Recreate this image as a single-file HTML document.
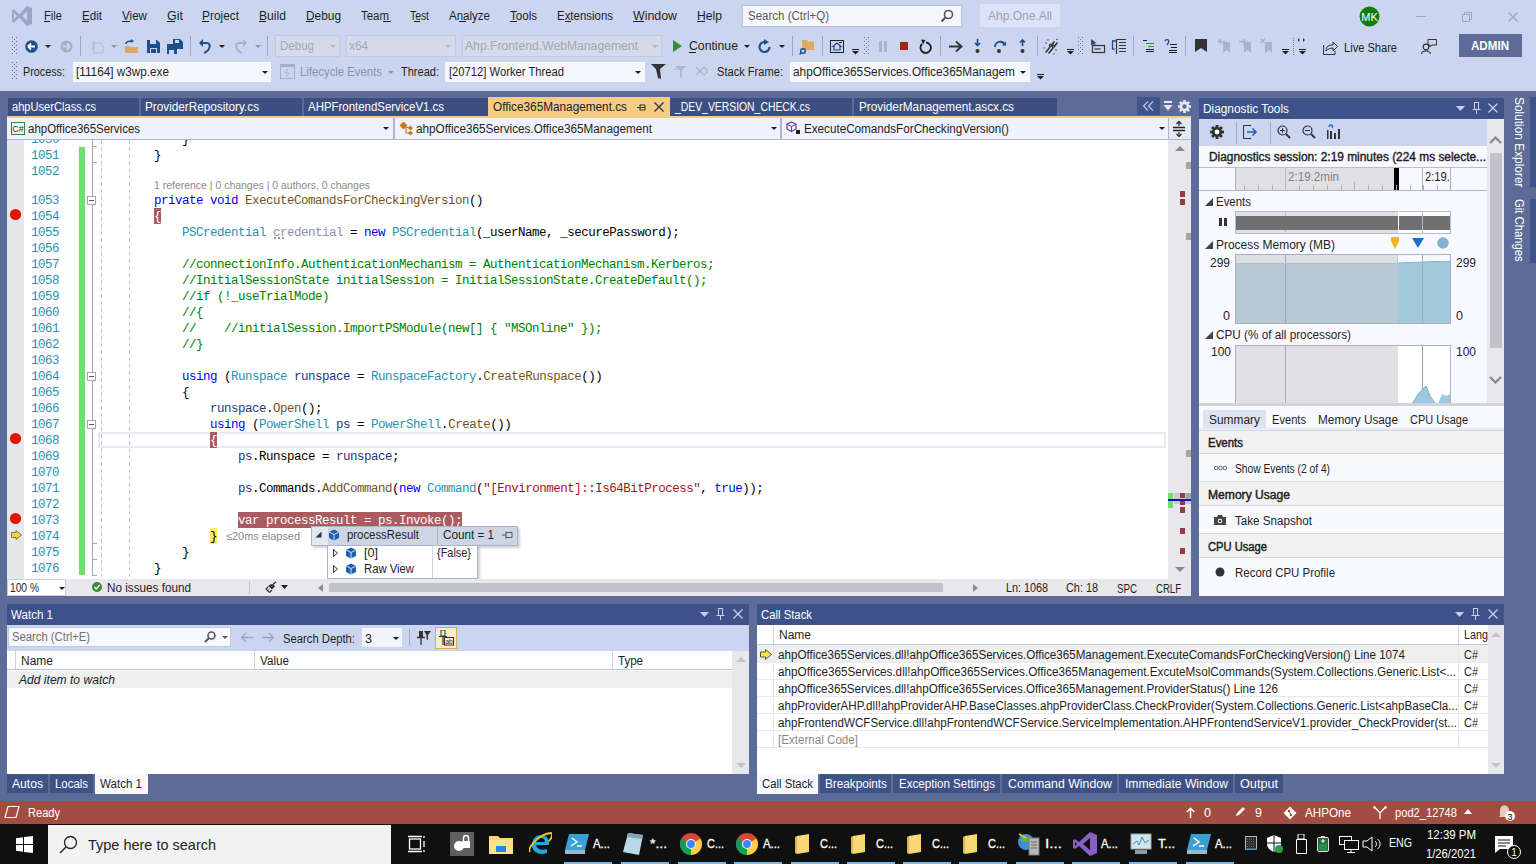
<!DOCTYPE html><html><head><meta charset='utf-8'><title>VS</title><style>
*{margin:0;padding:0;box-sizing:border-box}
html,body{width:1536px;height:864px;overflow:hidden;background:#5d6b99;font-family:'Liberation Sans', sans-serif;}
.a{position:absolute;display:block}
.t{white-space:pre;transform-origin:0 0}
</style></head><body>
<div class="a" style="left:0px;top:0px;width:1536px;height:91px;background:#ccd5f0;"></div>
<svg class="a" style="left:12px;top:6px;" width="20" height="20" viewBox="0 0 20 20"><path d="M0 4.5 L2 3.5 L7.5 8.3 L15 0 L20 2.3 V17.7 L15 20 L7.5 11.7 L2 16.5 L0 15.5 Z M2 7 V13 L5.2 10 Z M15 5.8 V14.2 L10.3 10 Z" fill="#9aa5c9" fill-rule="evenodd"/></svg>
<span class="a t" id="t1" style="transform:scaleX(0.9305);left:44px;top:9.84px;font-size:12px;line-height:12px;color:#1e1e1e;">File</span>
<span class="a t" id="t2" style="transform:scaleX(0.9668);left:82px;top:9.84px;font-size:12px;line-height:12px;color:#1e1e1e;">Edit</span>
<span class="a t" id="t3" style="transform:scaleX(0.9691);left:122px;top:9.84px;font-size:12px;line-height:12px;color:#1e1e1e;">View</span>
<span class="a t" id="t4" style="transform:scaleX(1.0428);left:167px;top:9.84px;font-size:12px;line-height:12px;color:#1e1e1e;">Git</span>
<span class="a t" id="t5" style="transform:scaleX(0.9904);left:202px;top:9.84px;font-size:12px;line-height:12px;color:#1e1e1e;">Project</span>
<span class="a t" id="t6" style="transform:scaleX(1.0117);left:259px;top:9.84px;font-size:12px;line-height:12px;color:#1e1e1e;">Build</span>
<span class="a t" id="t7" style="transform:scaleX(0.9894);left:306px;top:9.84px;font-size:12px;line-height:12px;color:#1e1e1e;">Debug</span>
<span class="a t" id="t8" style="transform:scaleX(0.9542);left:361px;top:9.84px;font-size:12px;line-height:12px;color:#1e1e1e;">Team</span>
<span class="a t" id="t9" style="transform:scaleX(0.8630);left:410px;top:9.84px;font-size:12px;line-height:12px;color:#1e1e1e;">Test</span>
<span class="a t" id="t10" style="transform:scaleX(0.9601);left:449px;top:9.84px;font-size:12px;line-height:12px;color:#1e1e1e;">Analyze</span>
<span class="a t" id="t11" style="transform:scaleX(0.9637);left:510px;top:9.84px;font-size:12px;line-height:12px;color:#1e1e1e;">Tools</span>
<span class="a t" id="t12" style="transform:scaleX(0.9540);left:557px;top:9.84px;font-size:12px;line-height:12px;color:#1e1e1e;">Extensions</span>
<span class="a t" id="t13" style="transform:scaleX(1.0307);left:633px;top:9.84px;font-size:12px;line-height:12px;color:#1e1e1e;">Window</span>
<span class="a t" id="t14" style="transform:scaleX(1.0127);left:697px;top:9.84px;font-size:12px;line-height:12px;color:#1e1e1e;">Help</span>
<div class="a" style="left:44px;top:21px;width:6px;height:1px;background:#1e1e1e;"></div>
<div class="a" style="left:82px;top:21px;width:7px;height:1px;background:#1e1e1e;"></div>
<div class="a" style="left:122px;top:21px;width:8px;height:1px;background:#1e1e1e;"></div>
<div class="a" style="left:167px;top:21px;width:8px;height:1px;background:#1e1e1e;"></div>
<div class="a" style="left:202px;top:21px;width:7px;height:1px;background:#1e1e1e;"></div>
<div class="a" style="left:259px;top:21px;width:7px;height:1px;background:#1e1e1e;"></div>
<div class="a" style="left:306px;top:21px;width:8px;height:1px;background:#1e1e1e;"></div>
<div class="a" style="left:383px;top:21px;width:8px;height:1px;background:#1e1e1e;"></div>
<div class="a" style="left:414px;top:21px;width:6px;height:1px;background:#1e1e1e;"></div>
<div class="a" style="left:459px;top:21px;width:7px;height:1px;background:#1e1e1e;"></div>
<div class="a" style="left:510px;top:21px;width:7px;height:1px;background:#1e1e1e;"></div>
<div class="a" style="left:565px;top:21px;width:6px;height:1px;background:#1e1e1e;"></div>
<div class="a" style="left:633px;top:21px;width:11px;height:1px;background:#1e1e1e;"></div>
<div class="a" style="left:697px;top:21px;width:8px;height:1px;background:#1e1e1e;"></div>
<div class="a" style="left:742px;top:5px;width:220px;height:22px;background:#f5f7fc;border:1px solid #b9c2dd;"></div>
<span class="a t" id="t15" style="transform:scaleX(0.9602);left:748px;top:9.84px;font-size:12px;line-height:12px;color:#5a5a5a;">Search (Ctrl+Q)</span>
<svg class="a" style="left:940px;top:9px;" width="14" height="14" viewBox="0 0 14 14"><circle cx="8.5" cy="5.5" r="4" fill="none" stroke="#555" stroke-width="1.6"/><path d="M5.7 8.3 L1.5 12.5" stroke="#555" stroke-width="2"/></svg>
<div class="a" style="left:980px;top:4px;width:80px;height:23px;background:#dde3f6;"></div>
<span class="a t" id="t16" style="transform:scaleX(0.9993);left:988px;top:9.84px;font-size:12px;line-height:12px;color:#9aa1b8;">Ahp.One.All</span>
<svg class="a" style="left:1359px;top:6px;" width="21" height="21" viewBox="0 0 21 21"><circle cx="10.5" cy="10.5" r="10" fill="#107c10"/><text x="10.5" y="14.5" font-family="Liberation Sans" font-size="11" fill="#fff" text-anchor="middle">MK</text></svg>
<div class="a" style="left:1416px;top:16px;width:10px;height:1px;background:#9aa3bf;"></div>
<svg class="a" style="left:1462px;top:12px;" width="11" height="10" viewBox="0 0 11 10"><rect x="0.5" y="2.5" width="7" height="7" fill="none" stroke="#9aa3bf"/><path d="M2.5 2.5 V0.5 H9.5 V7.5 H7.5" fill="none" stroke="#9aa3bf"/></svg>
<svg class="a" style="left:1508px;top:12px;" width="10" height="10" viewBox="0 0 10 10"><path d="M0.5 0.5 L9.5 9.5 M9.5 0.5 L0.5 9.5" stroke="#9aa3bf" stroke-width="1.1"/></svg>
<svg class="a" style="left:12px;top:37px;" width="5" height="18" viewBox="0 0 5 18"><rect x="0" y="0" width="1" height="1" fill="#66719a"/><rect x="4" y="0" width="1" height="1" fill="#66719a"/><rect x="2" y="2" width="1" height="1" fill="#66719a"/><rect x="2" y="2" width="1" height="1" fill="#66719a"/><rect x="0" y="4" width="1" height="1" fill="#66719a"/><rect x="4" y="4" width="1" height="1" fill="#66719a"/><rect x="2" y="6" width="1" height="1" fill="#66719a"/><rect x="2" y="6" width="1" height="1" fill="#66719a"/><rect x="0" y="8" width="1" height="1" fill="#66719a"/><rect x="4" y="8" width="1" height="1" fill="#66719a"/><rect x="2" y="10" width="1" height="1" fill="#66719a"/><rect x="2" y="10" width="1" height="1" fill="#66719a"/><rect x="0" y="12" width="1" height="1" fill="#66719a"/><rect x="4" y="12" width="1" height="1" fill="#66719a"/><rect x="2" y="14" width="1" height="1" fill="#66719a"/><rect x="2" y="14" width="1" height="1" fill="#66719a"/><rect x="0" y="16" width="1" height="1" fill="#66719a"/><rect x="4" y="16" width="1" height="1" fill="#66719a"/></svg>
<svg class="a" style="left:25px;top:40px;" width="13" height="13" viewBox="0 0 13 13"><circle cx="6.5" cy="6.5" r="6.3" fill="#1e4e8c"/><path d="M3 6.5 H10 M3 6.5 L6 3.5 M3 6.5 L6 9.5" stroke="#fff" stroke-width="1.8" fill="none"/></svg>
<svg class="a" style="left:45px;top:45px;" width="6" height="3" viewBox="0 0 6 3"><path d="M0 0 H6 L3 3 Z" fill="#1e1e1e"/></svg>
<svg class="a" style="left:60px;top:40px;" width="13" height="13" viewBox="0 0 13 13"><circle cx="6.5" cy="6.5" r="6" fill="#a7afc7"/><path d="M10 6.5 H3 M10 6.5 L7 3.5 M10 6.5 L7 9.5" stroke="#ccd5f0" stroke-width="1.8" fill="none"/></svg>
<div class="a" style="left:80px;top:36px;width:1px;height:20px;background:#9aa6c9;"></div>
<svg class="a" style="left:90px;top:39px;" width="14" height="15" viewBox="0 0 14 15"><path d="M4 4 H10 L13 7 V14 H4 Z" fill="none" stroke="#b0b7cc"/><path d="M1 10 H3 V1" stroke="#b0b7cc" fill="none"/></svg>
<svg class="a" style="left:111px;top:45px;" width="6" height="3" viewBox="0 0 6 3"><path d="M0 0 H6 L3 3 Z" fill="#8e96ad"/></svg>
<svg class="a" style="left:124px;top:39px;" width="15" height="15" viewBox="0 0 15 15"><path d="M1 7 H5 L6 8 H14 V14 H1 Z" fill="#dcaa63"/><path d="M2 5 C2 2 5 2 8 2" stroke="#1e4e8c" stroke-width="1.5" fill="none"/><path d="M7 0 L10 2 L7 4 Z" fill="#1e4e8c"/></svg>
<svg class="a" style="left:147px;top:40px;" width="13" height="13" viewBox="0 0 13 13"><path d="M0 0 H10 L13 3 V13 H0 Z" fill="#1e4e8c"/><rect x="3" y="0" width="6" height="4" fill="#ccd5f0"/><rect x="3" y="8" width="7" height="5" fill="#ccd5f0"/><rect x="4" y="9" width="5" height="4" fill="#1e4e8c"/></svg>
<svg class="a" style="left:167px;top:39px;" width="16" height="15" viewBox="0 0 16 15"><path d="M6 0 H13 L16 3 V10 H6 Z" fill="#1e4e8c"/><path d="M0 5 H8 L10 7 V15 H0 Z" fill="#1e4e8c"/><rect x="2" y="11" width="5" height="4" fill="#ccd5f0"/><rect x="8" y="1" width="4" height="3" fill="#ccd5f0"/></svg>
<div class="a" style="left:190px;top:36px;width:1px;height:20px;background:#9aa6c9;"></div>
<svg class="a" style="left:199px;top:39px;" width="13" height="15" viewBox="0 0 13 15"><path d="M2 4 H8 C12 4 12 11 5 14" stroke="#1e4e8c" stroke-width="2" fill="none"/><path d="M0 4 L4 0 V8 Z" fill="#1e4e8c"/></svg>
<svg class="a" style="left:219px;top:45px;" width="6" height="3" viewBox="0 0 6 3"><path d="M0 0 H6 L3 3 Z" fill="#1e1e1e"/></svg>
<svg class="a" style="left:234px;top:39px;" width="13" height="15" viewBox="0 0 13 15"><path d="M11 4 H5 C1 4 1 11 8 14" stroke="#a7afc7" stroke-width="2" fill="none"/><path d="M13 4 L9 0 V8 Z" fill="#a7afc7"/></svg>
<svg class="a" style="left:255px;top:45px;" width="6" height="3" viewBox="0 0 6 3"><path d="M0 0 H6 L3 3 Z" fill="#8e96ad"/></svg>
<div class="a" style="left:267px;top:36px;width:1px;height:20px;background:#9aa6c9;"></div>
<div class="a" style="left:275px;top:35px;width:65px;height:22px;background:#d5dbea;border:1px solid #c3cadd;"></div>
<span class="a t" id="t17" style="transform:scaleX(0.9611);left:280px;top:39.84px;font-size:12px;line-height:12px;color:#a1a7b8;">Debug</span>
<svg class="a" style="left:330px;top:45px;" width="6" height="3" viewBox="0 0 6 3"><path d="M0 0 H6 L3 3 Z" fill="#b0b6c6"/></svg>
<div class="a" style="left:346px;top:35px;width:110px;height:22px;background:#d5dbea;border:1px solid #c3cadd;"></div>
<span class="a t" id="t18" style="transform:scaleX(0.9814);left:349px;top:39.84px;font-size:12px;line-height:12px;color:#a1a7b8;">x64</span>
<svg class="a" style="left:445px;top:45px;" width="6" height="3" viewBox="0 0 6 3"><path d="M0 0 H6 L3 3 Z" fill="#b0b6c6"/></svg>
<div class="a" style="left:462px;top:35px;width:200px;height:22px;background:#d5dbea;border:1px solid #c3cadd;"></div>
<span class="a t" id="t19" style="transform:scaleX(1.0143);left:465px;top:39.84px;font-size:12px;line-height:12px;color:#a1a7b8;">Ahp.Frontend.WebManagement</span>
<svg class="a" style="left:652px;top:45px;" width="6" height="3" viewBox="0 0 6 3"><path d="M0 0 H6 L3 3 Z" fill="#b0b6c6"/></svg>
<svg class="a" style="left:673px;top:40px;" width="9" height="12" viewBox="0 0 9 12"><path d="M0 0 L9 6 L0 12 Z" fill="#388a34"/></svg>
<span class="a t" id="t20" style="transform:scaleX(1.0198);left:689px;top:39.84px;font-size:12px;line-height:12px;color:#1e1e1e;">Continue</span>
<div class="a" style="left:689px;top:52px;width:7px;height:1px;background:#1e1e1e;"></div>
<svg class="a" style="left:744px;top:45px;" width="6" height="3" viewBox="0 0 6 3"><path d="M0 0 H6 L3 3 Z" fill="#1e1e1e"/></svg>
<svg class="a" style="left:758px;top:39px;" width="14" height="15" viewBox="0 0 14 15"><path d="M11.5 8 A5 5 0 1 1 7 3" stroke="#1e4e8c" stroke-width="2.2" fill="none"/><path d="M6 0 L11 3 L6 6 Z" fill="#1e4e8c"/></svg>
<svg class="a" style="left:779px;top:45px;" width="6" height="3" viewBox="0 0 6 3"><path d="M0 0 H6 L3 3 Z" fill="#1e1e1e"/></svg>
<div class="a" style="left:792px;top:36px;width:1px;height:20px;background:#9aa6c9;"></div>
<svg class="a" style="left:799px;top:39px;" width="16" height="16" viewBox="0 0 16 16"><path d="M3 1 H8 L9 2.5 H15 V11 H3 Z" fill="#dcaa63"/><circle cx="4" cy="12" r="2.3" fill="none" stroke="#1e4e8c" stroke-width="1.4"/><path d="M2.5 13.5 L0.5 15.5" stroke="#1e4e8c" stroke-width="1.5"/></svg>
<div class="a" style="left:822px;top:36px;width:1px;height:20px;background:#9aa6c9;"></div>
<svg class="a" style="left:830px;top:40px;" width="14" height="13" viewBox="0 0 14 13"><rect x="0.5" y="0.5" width="13" height="12" fill="none" stroke="#1e1e1e"/><path d="M7 3 L11 6.5 H10 V10 H4 V6.5 H3 Z" fill="none" stroke="#1e4e8c" stroke-width="1.2"/><rect x="9" y="2" width="3" height="1" fill="#1e1e1e"/></svg>
<div class="a" style="left:852px;top:49px;width:7px;height:1px;background:#1e1e1e;"></div>
<svg class="a" style="left:852px;top:51px;" width="7" height="4" viewBox="0 0 7 4"><path d="M0 0 H7 L3.5 3.5 Z" fill="#1e1e1e"/></svg>
<svg class="a" style="left:864px;top:37px;" width="5" height="18" viewBox="0 0 5 18"><rect x="0" y="0" width="1" height="1" fill="#66719a"/><rect x="4" y="0" width="1" height="1" fill="#66719a"/><rect x="2" y="2" width="1" height="1" fill="#66719a"/><rect x="2" y="2" width="1" height="1" fill="#66719a"/><rect x="0" y="4" width="1" height="1" fill="#66719a"/><rect x="4" y="4" width="1" height="1" fill="#66719a"/><rect x="2" y="6" width="1" height="1" fill="#66719a"/><rect x="2" y="6" width="1" height="1" fill="#66719a"/><rect x="0" y="8" width="1" height="1" fill="#66719a"/><rect x="4" y="8" width="1" height="1" fill="#66719a"/><rect x="2" y="10" width="1" height="1" fill="#66719a"/><rect x="2" y="10" width="1" height="1" fill="#66719a"/><rect x="0" y="12" width="1" height="1" fill="#66719a"/><rect x="4" y="12" width="1" height="1" fill="#66719a"/><rect x="2" y="14" width="1" height="1" fill="#66719a"/><rect x="2" y="14" width="1" height="1" fill="#66719a"/><rect x="0" y="16" width="1" height="1" fill="#66719a"/><rect x="4" y="16" width="1" height="1" fill="#66719a"/></svg>
<svg class="a" style="left:879px;top:41px;" width="8" height="11" viewBox="0 0 8 11"><rect x="0" y="0" width="3" height="11" fill="#aab2c8"/><rect x="5" y="0" width="3" height="11" fill="#aab2c8"/></svg>
<div class="a" style="left:900px;top:42px;width:8px;height:8px;background:#a1260d;"></div>
<svg class="a" style="left:919px;top:39px;" width="14" height="15" viewBox="0 0 14 15"><path d="M3 5 A5.2 5.2 0 1 0 7 3.5" stroke="#1e1e1e" stroke-width="1.8" fill="none"/><path d="M2 0.5 L6.5 1 L4 5.5 Z" fill="#1e1e1e"/></svg>
<div class="a" style="left:940px;top:36px;width:1px;height:20px;background:#9aa6c9;"></div>
<svg class="a" style="left:949px;top:40px;" width="14" height="13" viewBox="0 0 14 13"><path d="M0 6.5 H12 M7 1.5 L12.5 6.5 L7 11.5" stroke="#333" stroke-width="1.9" fill="none"/></svg>
<svg class="a" style="left:974px;top:39px;" width="7" height="15" viewBox="0 0 7 15"><path d="M3.5 0 V6 M1 4 L3.5 6.5 L6 4" stroke="#1e4e8c" stroke-width="1.7" fill="none"/><circle cx="3.5" cy="12" r="2" fill="#333"/></svg>
<svg class="a" style="left:993px;top:39px;" width="14" height="15" viewBox="0 0 14 15"><path d="M2 8 C2 2 10 1 12 6" stroke="#1e4e8c" stroke-width="1.8" fill="none"/><path d="M9 6.5 H13 V2.5 Z" fill="#1e4e8c"/><circle cx="6" cy="12" r="2" fill="#333"/></svg>
<svg class="a" style="left:1019px;top:39px;" width="7" height="15" viewBox="0 0 7 15"><path d="M3.5 7 V1 M1 3.5 L3.5 1 L6 3.5" stroke="#1e4e8c" stroke-width="1.7" fill="none"/><circle cx="3.5" cy="12" r="2" fill="#333"/></svg>
<div class="a" style="left:1037px;top:36px;width:1px;height:20px;background:#9aa6c9;"></div>
<svg class="a" style="left:1043px;top:38px;" width="17" height="17" viewBox="0 0 17 17"><path d="M3 14 L7 9 M8 8 L11 4 M6 15 L10 10 M11 9 L14 5" stroke="#333" stroke-width="1.6" stroke-linecap="round"/><path d="M7 9 C5 7 8 5 9 7 M10 10 C8 8 11 6 12 8" stroke="#333" stroke-width="1.1" fill="none"/><circle cx="3" cy="5" r="0.8" fill="#333"/><circle cx="13" cy="12" r="0.8" fill="#333"/><circle cx="5" cy="2" r="0.7" fill="#333"/><circle cx="14" cy="1.5" r="0.7" fill="#333"/><circle cx="1" cy="10" r="0.7" fill="#333"/><circle cx="11" cy="16" r="0.7" fill="#333"/></svg>
<div class="a" style="left:1067px;top:49px;width:7px;height:1px;background:#1e1e1e;"></div>
<svg class="a" style="left:1067px;top:51px;" width="7" height="4" viewBox="0 0 7 4"><path d="M0 0 H7 L3.5 3.5 Z" fill="#1e1e1e"/></svg>
<svg class="a" style="left:1078px;top:37px;" width="5" height="18" viewBox="0 0 5 18"><rect x="0" y="0" width="1" height="1" fill="#66719a"/><rect x="4" y="0" width="1" height="1" fill="#66719a"/><rect x="2" y="2" width="1" height="1" fill="#66719a"/><rect x="2" y="2" width="1" height="1" fill="#66719a"/><rect x="0" y="4" width="1" height="1" fill="#66719a"/><rect x="4" y="4" width="1" height="1" fill="#66719a"/><rect x="2" y="6" width="1" height="1" fill="#66719a"/><rect x="2" y="6" width="1" height="1" fill="#66719a"/><rect x="0" y="8" width="1" height="1" fill="#66719a"/><rect x="4" y="8" width="1" height="1" fill="#66719a"/><rect x="2" y="10" width="1" height="1" fill="#66719a"/><rect x="2" y="10" width="1" height="1" fill="#66719a"/><rect x="0" y="12" width="1" height="1" fill="#66719a"/><rect x="4" y="12" width="1" height="1" fill="#66719a"/><rect x="2" y="14" width="1" height="1" fill="#66719a"/><rect x="2" y="14" width="1" height="1" fill="#66719a"/><rect x="0" y="16" width="1" height="1" fill="#66719a"/><rect x="4" y="16" width="1" height="1" fill="#66719a"/></svg>
<svg class="a" style="left:1090px;top:38px;" width="16" height="16" viewBox="0 0 16 16"><path d="M1 1 L6.5 5 L4.5 5.5 L6 8 L5 8.5 L3.5 6 L1 7.5 Z" fill="#1e4e8c"/><rect x="2.5" y="7.5" width="12" height="7" fill="none" stroke="#333" stroke-width="1.2"/><path d="M4.5 11 H10.5" stroke="#333" stroke-width="1.2"/></svg>
<svg class="a" style="left:1111px;top:38px;" width="16" height="16" viewBox="0 0 16 16"><path d="M3.5 3 H1.5 V11 H3.5" stroke="#1e4e8c" stroke-width="1.3" fill="none"/><path d="M2 3 H5" stroke="#1e4e8c" stroke-width="1.3"/><path d="M5.5 1 V16" stroke="#333" stroke-width="1.2"/><path d="M6 1.5 H15 M8 4.5 H15 M8 7.5 H15 M8 10.5 H15 M8 13.5 H15" stroke="#333" stroke-width="1.1"/></svg>
<div class="a" style="left:1133px;top:36px;width:1px;height:20px;background:#9aa6c9;"></div>
<svg class="a" style="left:1143px;top:40px;" width="12" height="12" viewBox="0 0 12 12"><path d="M0 0.5 H4 M3 3.5 H11 M5 6.5 H11 M3 9.5 H11 M3 11.5 H11" stroke="#1e1e1e"/><path d="M3 3.5 H11 M5 6.5 H11" stroke="#388a34"/></svg>
<svg class="a" style="left:1164px;top:39px;" width="14" height="14" viewBox="0 0 14 14"><path d="M1 2 C3 -1 7 1 3 6" stroke="#1e4e8c" stroke-width="1.4" fill="none"/><path d="M6 5.5 H13 M7 8.5 H13 M5 11.5 H13 M5 13.5 H13" stroke="#1e1e1e"/></svg>
<div class="a" style="left:1185px;top:36px;width:1px;height:20px;background:#9aa6c9;"></div>
<svg class="a" style="left:1195px;top:39px;" width="12" height="13" viewBox="0 0 12 13"><path d="M0 0 H12 V13 L6 9 L0 13 Z" fill="#333"/></svg>
<svg class="a" style="left:1218px;top:38px;" width="13" height="15" viewBox="0 0 13 15"><path d="M5 4 H12 V15 L8.5 12 L5 15 Z" fill="#aab2c8"/><path d="M0.5 3.5 H7 M3 1 L0.5 3.5 L3 6" stroke="#aab2c8" stroke-width="1.3" fill="none"/></svg>
<svg class="a" style="left:1239px;top:38px;" width="13" height="15" viewBox="0 0 13 15"><path d="M5 4 H12 V15 L8.5 12 L5 15 Z" fill="#aab2c8"/><path d="M0 3.5 H6.5 M4 1 L6.5 3.5 L4 6" stroke="#aab2c8" stroke-width="1.3" fill="none"/></svg>
<svg class="a" style="left:1260px;top:38px;" width="13" height="15" viewBox="0 0 13 15"><path d="M5 4 H12 V15 L8.5 12 L5 15 Z" fill="#aab2c8"/><path d="M0.5 0.5 L5 5 M5 0.5 L0.5 5" stroke="#aab2c8" stroke-width="1.3"/></svg>
<div class="a" style="left:1282px;top:49px;width:7px;height:1px;background:#1e1e1e;"></div>
<svg class="a" style="left:1282px;top:51px;" width="7" height="4" viewBox="0 0 7 4"><path d="M0 0 H7 L3.5 3.5 Z" fill="#1e1e1e"/></svg>
<svg class="a" style="left:1293px;top:38px;" width="1" height="17" viewBox="0 0 1 17"><rect x="0" y="0" width="1" height="1" fill="#6f7a9c"/><rect x="0" y="2" width="1" height="1" fill="#6f7a9c"/><rect x="0" y="4" width="1" height="1" fill="#6f7a9c"/><rect x="0" y="6" width="1" height="1" fill="#6f7a9c"/><rect x="0" y="8" width="1" height="1" fill="#6f7a9c"/><rect x="0" y="10" width="1" height="1" fill="#6f7a9c"/><rect x="0" y="12" width="1" height="1" fill="#6f7a9c"/><rect x="0" y="14" width="1" height="1" fill="#6f7a9c"/><rect x="0" y="16" width="1" height="1" fill="#6f7a9c"/></svg>
<svg class="a" style="left:1298px;top:38px;" width="8" height="4" viewBox="0 0 8 4"><path d="M0 0 L2 2 L0 4 Z M5 0 L7 2 L5 4 Z" fill="#333"/></svg>
<div class="a" style="left:1299px;top:49px;width:7px;height:1px;background:#1e1e1e;"></div>
<svg class="a" style="left:1299px;top:51px;" width="7" height="4" viewBox="0 0 7 4"><path d="M0 0 H7 L3.5 3.5 Z" fill="#1e1e1e"/></svg>
<svg class="a" style="left:1323px;top:41px;" width="15" height="14" viewBox="0 0 15 14"><path d="M0.5 4 V13.5 H12 V10" stroke="#333" fill="none"/><path d="M3 10 C3 5 6 4 10 4 V1 L14.5 5.5 L10 10 V7 C7 7 5 8 3 10 Z" stroke="#333" fill="none"/></svg>
<span class="a t" id="t21" style="transform:scaleX(0.9237);left:1344px;top:41.84px;font-size:12px;line-height:12px;color:#1e1e1e;">Live Share</span>
<svg class="a" style="left:1421px;top:39px;" width="16" height="15" viewBox="0 0 16 15"><circle cx="5" cy="8" r="2.8" fill="none" stroke="#333" stroke-width="1.2"/><path d="M0.5 15 C1 11 9 11 9.5 15" stroke="#333" stroke-width="1.2" fill="none"/><path d="M7 0.5 H15.5 V6 H11 L9 8 V6 H7 Z" fill="none" stroke="#333"/></svg>
<div class="a" style="left:1459px;top:34px;width:63px;height:23px;background:#5d6b99;"></div>
<span class="a t" id="t22" style="transform:scaleX(0.9662);left:1471px;top:39.84px;font-size:12px;line-height:12px;color:#ffffff;font-weight:bold;">ADMIN</span>
<svg class="a" style="left:12px;top:62px;" width="5" height="18" viewBox="0 0 5 18"><rect x="0" y="0" width="1" height="1" fill="#66719a"/><rect x="4" y="0" width="1" height="1" fill="#66719a"/><rect x="2" y="2" width="1" height="1" fill="#66719a"/><rect x="2" y="2" width="1" height="1" fill="#66719a"/><rect x="0" y="4" width="1" height="1" fill="#66719a"/><rect x="4" y="4" width="1" height="1" fill="#66719a"/><rect x="2" y="6" width="1" height="1" fill="#66719a"/><rect x="2" y="6" width="1" height="1" fill="#66719a"/><rect x="0" y="8" width="1" height="1" fill="#66719a"/><rect x="4" y="8" width="1" height="1" fill="#66719a"/><rect x="2" y="10" width="1" height="1" fill="#66719a"/><rect x="2" y="10" width="1" height="1" fill="#66719a"/><rect x="0" y="12" width="1" height="1" fill="#66719a"/><rect x="4" y="12" width="1" height="1" fill="#66719a"/><rect x="2" y="14" width="1" height="1" fill="#66719a"/><rect x="2" y="14" width="1" height="1" fill="#66719a"/><rect x="0" y="16" width="1" height="1" fill="#66719a"/><rect x="4" y="16" width="1" height="1" fill="#66719a"/></svg>
<span class="a t" id="t23" style="transform:scaleX(0.8996);left:23px;top:65.84px;font-size:12px;line-height:12px;color:#1e1e1e;">Process:</span>
<div class="a" style="left:73px;top:62px;width:198px;height:20px;background:#f5f7fc;"></div>
<span class="a t" id="t24" style="transform:scaleX(0.9794);left:76px;top:65.84px;font-size:12px;line-height:12px;color:#1e1e1e;">[11164] w3wp.exe</span>
<svg class="a" style="left:262px;top:71px;" width="6" height="3" viewBox="0 0 6 3"><path d="M0 0 H6 L3 3 Z" fill="#1e1e1e"/></svg>
<svg class="a" style="left:280px;top:64px;" width="15" height="15" viewBox="0 0 15 15"><rect x="0.5" y="0.5" width="14" height="14" fill="none" stroke="#a7afc7"/><rect x="1" y="1" width="13" height="2" fill="#a7afc7"/><path d="M8 5 L5 9 H9 L6 13" stroke="#a7afc7" fill="none"/></svg>
<span class="a t" id="t25" style="transform:scaleX(0.9456);left:300px;top:65.84px;font-size:12px;line-height:12px;color:#8a91a7;">Lifecycle Events</span>
<svg class="a" style="left:388px;top:71px;" width="6" height="3" viewBox="0 0 6 3"><path d="M0 0 H6 L3 3 Z" fill="#8e96ad"/></svg>
<span class="a t" id="t26" style="transform:scaleX(0.9188);left:401px;top:65.84px;font-size:12px;line-height:12px;color:#1e1e1e;">Thread:</span>
<div class="a" style="left:445px;top:62px;width:200px;height:20px;background:#f5f7fc;"></div>
<span class="a t" id="t27" style="transform:scaleX(0.9352);left:449px;top:65.84px;font-size:12px;line-height:12px;color:#1e1e1e;">[20712] Worker Thread</span>
<svg class="a" style="left:635px;top:71px;" width="6" height="3" viewBox="0 0 6 3"><path d="M0 0 H6 L3 3 Z" fill="#1e1e1e"/></svg>
<svg class="a" style="left:651px;top:64px;" width="15" height="16" viewBox="0 0 15 16"><path d="M0 0 H15 L9 5 L10 15 L7 14 L5 5 Z" fill="#333"/></svg>
<svg class="a" style="left:674px;top:65px;" width="14" height="14" viewBox="0 0 14 14"><path d="M1 1 H13 L8 5 V13 L6 12 V5 Z" fill="#b0b7cc"/><path d="M0 4 H6" stroke="#b0b7cc"/></svg>
<svg class="a" style="left:695px;top:65px;" width="15" height="14" viewBox="0 0 15 14"><path d="M1 2 L5 6 L9 2 L13 6 M1 10 L5 6 L9 10 L13 6" stroke="#b0b7cc" stroke-width="1.5" fill="none"/></svg>
<span class="a t" id="t28" style="transform:scaleX(0.9249);left:717px;top:65.84px;font-size:12px;line-height:12px;color:#1e1e1e;">Stack Frame:</span>
<div class="a" style="left:790px;top:62px;width:240px;height:20px;background:#f5f7fc;"></div>
<span class="a t" id="t29" style="transform:scaleX(0.9865);left:793px;top:65.84px;font-size:12px;line-height:12px;color:#1e1e1e;">ahpOffice365Services.Office365Managem</span>
<svg class="a" style="left:1020px;top:71px;" width="6" height="3" viewBox="0 0 6 3"><path d="M0 0 H6 L3 3 Z" fill="#1e1e1e"/></svg>
<div class="a" style="left:1037px;top:74px;width:7px;height:1px;background:#1e1e1e;"></div>
<svg class="a" style="left:1037px;top:76px;" width="7" height="4" viewBox="0 0 7 4"><path d="M0 0 H7 L3.5 3.5 Z" fill="#1e1e1e"/></svg>
<div class="a" style="left:8px;top:98px;width:131px;height:18px;background:#3c4f80;"></div>
<span class="a t" id="t30" style="transform:scaleX(0.9261);left:12px;top:100.84px;font-size:12px;line-height:12px;color:#ffffff;">ahpUserClass.cs</span>
<div class="a" style="left:141px;top:98px;width:161px;height:18px;background:#3c4f80;"></div>
<span class="a t" id="t31" style="transform:scaleX(0.9787);left:145px;top:100.84px;font-size:12px;line-height:12px;color:#ffffff;">ProviderRepository.cs</span>
<div class="a" style="left:304px;top:98px;width:184px;height:18px;background:#3c4f80;"></div>
<span class="a t" id="t32" style="transform:scaleX(0.9528);left:308px;top:100.84px;font-size:12px;line-height:12px;color:#ffffff;">AHPFrontendServiceV1.cs</span>
<div class="a" style="left:670px;top:98px;width:182px;height:18px;background:#3c4f80;"></div>
<span class="a t" id="t33" style="transform:scaleX(0.8651);left:675px;top:100.84px;font-size:12px;line-height:12px;color:#ffffff;">_DEV_VERSION_CHECK.cs</span>
<div class="a" style="left:854px;top:98px;width:203px;height:18px;background:#3c4f80;"></div>
<span class="a t" id="t34" style="transform:scaleX(0.9805);left:859px;top:100.84px;font-size:12px;line-height:12px;color:#ffffff;">ProviderManagement.ascx.cs</span>
<div class="a" style="left:488px;top:97px;width:182px;height:21px;background:#f5cc84;"></div>
<span class="a t" id="t35" style="transform:scaleX(0.9815);left:493px;top:100.84px;font-size:12px;line-height:12px;color:#1e1e1e;">Office365Management.cs</span>
<svg class="a" style="left:636px;top:102px;" width="11" height="11" viewBox="0 0 11 11"><path d="M1 5.5 H4 M4 2.5 V8.5 M4 3 H9 V8 H4" stroke="#333" fill="none"/><rect x="4" y="5" width="5" height="1" fill="#333"/></svg>
<svg class="a" style="left:654px;top:102px;" width="10" height="10" viewBox="0 0 10 10"><path d="M0.5 0.5 L9.5 9.5 M9.5 0.5 L0.5 9.5" stroke="#333" stroke-width="1.3"/></svg>
<div class="a" style="left:1137px;top:97px;width:23px;height:18px;background:#40548c;"></div>
<svg class="a" style="left:1142px;top:101px;" width="12" height="10" viewBox="0 0 12 10"><path d="M6 0.5 L1.5 5 L6 9.5 M11 0.5 L6.5 5 L11 9.5" stroke="#c0c8e0" stroke-width="1.2" fill="none"/></svg>
<svg class="a" style="left:1163px;top:100px;" width="10" height="12" viewBox="0 0 10 12"><rect x="1" y="1" width="8" height="2" fill="#e6eaf5"/><path d="M0.5 5 H9.5 L5 10.5 Z" fill="#e6eaf5"/></svg>
<svg class="a" style="left:1178px;top:100px;" width="13" height="13" viewBox="0 0 13 13"><circle cx="6.5" cy="6.5" r="4.68" fill="#e6eaf5"/><rect x="5.2" y="0" width="2.6" height="3.9" fill="#e6eaf5" transform="rotate(0 6.5 6.5)"/><rect x="5.2" y="0" width="2.6" height="3.9" fill="#e6eaf5" transform="rotate(45 6.5 6.5)"/><rect x="5.2" y="0" width="2.6" height="3.9" fill="#e6eaf5" transform="rotate(90 6.5 6.5)"/><rect x="5.2" y="0" width="2.6" height="3.9" fill="#e6eaf5" transform="rotate(135 6.5 6.5)"/><rect x="5.2" y="0" width="2.6" height="3.9" fill="#e6eaf5" transform="rotate(180 6.5 6.5)"/><rect x="5.2" y="0" width="2.6" height="3.9" fill="#e6eaf5" transform="rotate(225 6.5 6.5)"/><rect x="5.2" y="0" width="2.6" height="3.9" fill="#e6eaf5" transform="rotate(270 6.5 6.5)"/><rect x="5.2" y="0" width="2.6" height="3.9" fill="#e6eaf5" transform="rotate(315 6.5 6.5)"/><circle cx="6.5" cy="6.5" r="2.21" fill="#5d6b99"/></svg>
<div class="a" style="left:7px;top:116px;width:1184px;height:2px;background:#f5cc84;"></div>
<div class="a" style="left:7px;top:118px;width:1184px;height:22px;background:#eff2fa;"></div>
<div class="a" style="left:7px;top:139px;width:1184px;height:1px;background:#a9b6d9;"></div>
<div class="a" style="left:393px;top:118px;width:2px;height:21px;background:#a9b6d9;"></div>
<div class="a" style="left:780px;top:118px;width:2px;height:21px;background:#a9b6d9;"></div>
<div class="a" style="left:1168px;top:118px;width:1px;height:21px;background:#a9b6d9;"></div>
<div class="a" style="left:1169px;top:118px;width:22px;height:21px;background:#e6eaf5;"></div>
<svg class="a" style="left:11px;top:122px;" width="14" height="13" viewBox="0 0 14 13"><rect x="0.5" y="0.5" width="13" height="12" fill="#f4f4f4" stroke="#388a34"/><text x="7" y="10" font-family="Liberation Sans" font-size="9" fill="#333" text-anchor="middle">C#</text></svg>
<span class="a t" id="t36" style="transform:scaleX(0.9557);left:28px;top:122.84px;font-size:12px;line-height:12px;color:#1e1e1e;">ahpOffice365Services</span>
<svg class="a" style="left:383px;top:127px;" width="6" height="3" viewBox="0 0 6 3"><path d="M0 0 H6 L3 3 Z" fill="#1e1e1e"/></svg>
<svg class="a" style="left:398px;top:120px;" width="16" height="16" viewBox="0 0 16 16"><path d="M5.5 1.5 L9.5 5.5 L5.5 9.5 L1.5 5.5 Z" fill="#c27d1a"/><path d="M12.5 5.5 L15 8 L12.5 10.5 L10 8 Z M12.5 10.5 L15 13 L12.5 15.5 L10 13 Z" fill="#c27d1a"/><path d="M8 7.5 H11 M8 7.5 V13 H11" stroke="#c27d1a" stroke-width="1.1" fill="none"/></svg>
<span class="a t" id="t37" style="transform:scaleX(0.9763);left:416px;top:122.84px;font-size:12px;line-height:12px;color:#1e1e1e;">ahpOffice365Services.Office365Management</span>
<svg class="a" style="left:771px;top:127px;" width="6" height="3" viewBox="0 0 6 3"><path d="M0 0 H6 L3 3 Z" fill="#1e1e1e"/></svg>
<svg class="a" style="left:786px;top:121px;" width="15" height="14" viewBox="0 0 15 14"><path d="M5.5 1 L10 3.2 V8 L5.5 10.5 L1 8 V3.2 Z" fill="none" stroke="#6c3fa8" stroke-width="1.2"/><path d="M1 3.2 L5.5 5.5 L10 3.2 M5.5 5.5 V10.5" stroke="#6c3fa8" fill="none"/><rect x="10" y="9" width="4" height="4" fill="#1e1e1e"/></svg>
<span class="a t" id="t38" style="transform:scaleX(0.9726);left:804px;top:122.84px;font-size:12px;line-height:12px;color:#1e1e1e;">ExecuteComandsForCheckingVersion()</span>
<svg class="a" style="left:1159px;top:127px;" width="6" height="3" viewBox="0 0 6 3"><path d="M0 0 H6 L3 3 Z" fill="#1e1e1e"/></svg>
<svg class="a" style="left:1173px;top:121px;" width="14" height="16" viewBox="0 0 14 16"><path d="M0 6.5 H12 M0 9.5 H12" stroke="#222" stroke-width="1.3"/><path d="M6 0.5 V5 M6 11 V15.5" stroke="#222" stroke-width="1.2"/><path d="M3.5 3 L6 0.5 L8.5 3 M3.5 13 L6 15.5 L8.5 13" stroke="#222" fill="none" stroke-width="1.2"/></svg>
<div class="a" style="left:7px;top:140px;width:1161px;height:439px;background:#ffffff;"></div>
<div class="a" style="left:7px;top:140px;width:1161px;height:439px;overflow:hidden">
</div>
<div class="a" style="left:7px;top:140px;width:17px;height:439px;background:#e6e7e8;"></div>
<div class="a" style="left:79px;top:147px;width:6px;height:428px;background:#6ce16c;"></div>
<div class="a" style="left:92px;top:140px;width:1px;height:436px;background:#a5a5a5;"></div>
<div class="a" style="left:101px;top:140px;width:1px;height:437px;background:repeating-linear-gradient(#c8c8c8 0 4px, transparent 4px 7px)"></div>
<div class="a" style="left:129px;top:140px;width:1px;height:437px;background:repeating-linear-gradient(#c8c8c8 0 4px, transparent 4px 7px)"></div>
<div class="a" style="left:92px;top:146px;width:5px;height:1px;background:#a5a5a5;"></div>
<div class="a" style="left:92px;top:162px;width:5px;height:1px;background:#a5a5a5;"></div>
<div class="a" style="left:92px;top:543px;width:5px;height:1px;background:#a5a5a5;"></div>
<div class="a" style="left:92px;top:559px;width:5px;height:1px;background:#a5a5a5;"></div>
<div class="a" style="left:92px;top:575px;width:5px;height:1px;background:#a5a5a5;"></div>
<svg class="a" style="left:87px;top:196px;" width="9" height="9" viewBox="0 0 9 9"><rect x="0.5" y="0.5" width="8" height="8" fill="#fff" stroke="#a5a5a5"/><path d="M2 4.5 H7" stroke="#555"/></svg>
<svg class="a" style="left:87px;top:372px;" width="9" height="9" viewBox="0 0 9 9"><rect x="0.5" y="0.5" width="8" height="8" fill="#fff" stroke="#a5a5a5"/><path d="M2 4.5 H7" stroke="#555"/></svg>
<svg class="a" style="left:87px;top:420px;" width="9" height="9" viewBox="0 0 9 9"><rect x="0.5" y="0.5" width="8" height="8" fill="#fff" stroke="#a5a5a5"/><path d="M2 4.5 H7" stroke="#555"/></svg>
<div class="a" style="left:7px;top:140px;width:100px;height:439px;overflow:hidden">
<div class="a" style="left:24px;top:-5.58px;width:28px;text-align:right;font-family:'Liberation Mono', monospace;font-size:12.5px;line-height:12.5px;letter-spacing:-0.5px;color:#2b91af;white-space:pre">1050</div>
<div class="a" style="left:24px;top:10.42px;width:28px;text-align:right;font-family:'Liberation Mono', monospace;font-size:12.5px;line-height:12.5px;letter-spacing:-0.5px;color:#2b91af;white-space:pre">1051</div>
<div class="a" style="left:24px;top:26.42px;width:28px;text-align:right;font-family:'Liberation Mono', monospace;font-size:12.5px;line-height:12.5px;letter-spacing:-0.5px;color:#2b91af;white-space:pre">1052</div>
<div class="a" style="left:24px;top:55.42px;width:28px;text-align:right;font-family:'Liberation Mono', monospace;font-size:12.5px;line-height:12.5px;letter-spacing:-0.5px;color:#2b91af;white-space:pre">1053</div>
<div class="a" style="left:24px;top:71.42px;width:28px;text-align:right;font-family:'Liberation Mono', monospace;font-size:12.5px;line-height:12.5px;letter-spacing:-0.5px;color:#2b91af;white-space:pre">1054</div>
<div class="a" style="left:24px;top:87.42px;width:28px;text-align:right;font-family:'Liberation Mono', monospace;font-size:12.5px;line-height:12.5px;letter-spacing:-0.5px;color:#2b91af;white-space:pre">1055</div>
<div class="a" style="left:24px;top:103.42px;width:28px;text-align:right;font-family:'Liberation Mono', monospace;font-size:12.5px;line-height:12.5px;letter-spacing:-0.5px;color:#2b91af;white-space:pre">1056</div>
<div class="a" style="left:24px;top:119.42px;width:28px;text-align:right;font-family:'Liberation Mono', monospace;font-size:12.5px;line-height:12.5px;letter-spacing:-0.5px;color:#2b91af;white-space:pre">1057</div>
<div class="a" style="left:24px;top:135.42px;width:28px;text-align:right;font-family:'Liberation Mono', monospace;font-size:12.5px;line-height:12.5px;letter-spacing:-0.5px;color:#2b91af;white-space:pre">1058</div>
<div class="a" style="left:24px;top:151.42px;width:28px;text-align:right;font-family:'Liberation Mono', monospace;font-size:12.5px;line-height:12.5px;letter-spacing:-0.5px;color:#2b91af;white-space:pre">1059</div>
<div class="a" style="left:24px;top:167.42px;width:28px;text-align:right;font-family:'Liberation Mono', monospace;font-size:12.5px;line-height:12.5px;letter-spacing:-0.5px;color:#2b91af;white-space:pre">1060</div>
<div class="a" style="left:24px;top:183.42px;width:28px;text-align:right;font-family:'Liberation Mono', monospace;font-size:12.5px;line-height:12.5px;letter-spacing:-0.5px;color:#2b91af;white-space:pre">1061</div>
<div class="a" style="left:24px;top:199.42px;width:28px;text-align:right;font-family:'Liberation Mono', monospace;font-size:12.5px;line-height:12.5px;letter-spacing:-0.5px;color:#2b91af;white-space:pre">1062</div>
<div class="a" style="left:24px;top:215.42px;width:28px;text-align:right;font-family:'Liberation Mono', monospace;font-size:12.5px;line-height:12.5px;letter-spacing:-0.5px;color:#2b91af;white-space:pre">1063</div>
<div class="a" style="left:24px;top:231.42px;width:28px;text-align:right;font-family:'Liberation Mono', monospace;font-size:12.5px;line-height:12.5px;letter-spacing:-0.5px;color:#2b91af;white-space:pre">1064</div>
<div class="a" style="left:24px;top:247.42px;width:28px;text-align:right;font-family:'Liberation Mono', monospace;font-size:12.5px;line-height:12.5px;letter-spacing:-0.5px;color:#2b91af;white-space:pre">1065</div>
<div class="a" style="left:24px;top:263.42px;width:28px;text-align:right;font-family:'Liberation Mono', monospace;font-size:12.5px;line-height:12.5px;letter-spacing:-0.5px;color:#2b91af;white-space:pre">1066</div>
<div class="a" style="left:24px;top:279.42px;width:28px;text-align:right;font-family:'Liberation Mono', monospace;font-size:12.5px;line-height:12.5px;letter-spacing:-0.5px;color:#2b91af;white-space:pre">1067</div>
<div class="a" style="left:24px;top:295.42px;width:28px;text-align:right;font-family:'Liberation Mono', monospace;font-size:12.5px;line-height:12.5px;letter-spacing:-0.5px;color:#2b91af;white-space:pre">1068</div>
<div class="a" style="left:24px;top:311.42px;width:28px;text-align:right;font-family:'Liberation Mono', monospace;font-size:12.5px;line-height:12.5px;letter-spacing:-0.5px;color:#2b91af;white-space:pre">1069</div>
<div class="a" style="left:24px;top:327.42px;width:28px;text-align:right;font-family:'Liberation Mono', monospace;font-size:12.5px;line-height:12.5px;letter-spacing:-0.5px;color:#2b91af;white-space:pre">1070</div>
<div class="a" style="left:24px;top:343.42px;width:28px;text-align:right;font-family:'Liberation Mono', monospace;font-size:12.5px;line-height:12.5px;letter-spacing:-0.5px;color:#2b91af;white-space:pre">1071</div>
<div class="a" style="left:24px;top:359.42px;width:28px;text-align:right;font-family:'Liberation Mono', monospace;font-size:12.5px;line-height:12.5px;letter-spacing:-0.5px;color:#2b91af;white-space:pre">1072</div>
<div class="a" style="left:24px;top:375.42px;width:28px;text-align:right;font-family:'Liberation Mono', monospace;font-size:12.5px;line-height:12.5px;letter-spacing:-0.5px;color:#2b91af;white-space:pre">1073</div>
<div class="a" style="left:24px;top:391.42px;width:28px;text-align:right;font-family:'Liberation Mono', monospace;font-size:12.5px;line-height:12.5px;letter-spacing:-0.5px;color:#2b91af;white-space:pre">1074</div>
<div class="a" style="left:24px;top:407.42px;width:28px;text-align:right;font-family:'Liberation Mono', monospace;font-size:12.5px;line-height:12.5px;letter-spacing:-0.5px;color:#2b91af;white-space:pre">1075</div>
<div class="a" style="left:24px;top:423.42px;width:28px;text-align:right;font-family:'Liberation Mono', monospace;font-size:12.5px;line-height:12.5px;letter-spacing:-0.5px;color:#2b91af;white-space:pre">1076</div>
</div>
<div class="a" style="left:98px;top:432px;width:1068px;height:16px;border:2px solid #eaeaf2;"></div>
<div class="a" style="left:154px;top:208px;width:7px;height:16px;background:#ab5a60;"></div>
<div class="a" style="left:210px;top:432px;width:7px;height:16px;background:#ab5a60;"></div>
<div class="a" style="left:238px;top:512px;width:224px;height:16px;background:#ab5a60;"></div>
<div class="a" style="left:210px;top:528px;width:7px;height:16px;background:#ffee62;"></div>
<svg class="a" style="left:9px;top:208px;" width="13" height="13" viewBox="0 0 13 13"><circle cx="6.5" cy="6.5" r="5.6" fill="#e51400"/></svg>
<svg class="a" style="left:9px;top:432px;" width="13" height="13" viewBox="0 0 13 13"><circle cx="6.5" cy="6.5" r="5.6" fill="#e51400"/></svg>
<svg class="a" style="left:9px;top:512px;" width="13" height="13" viewBox="0 0 13 13"><circle cx="6.5" cy="6.5" r="5.6" fill="#e51400"/></svg>
<svg class="a" style="left:11px;top:530px;" width="11" height="10" viewBox="0 0 11 10"><path d="M0.5 2.5 H5 V0.5 L10.5 5 L5 9.5 V7.5 H0.5 Z" fill="#f8d23a" stroke="#6b6b4a" stroke-width="0.9"/></svg>
<div class="a" style="left:0;top:140px;width:1168px;height:439px;overflow:hidden"><div class="a" style="left:0;top:-140px;width:1168px;height:864px">
<div class="a" style="left:182px;top:134.42px;font-family:'Liberation Mono', monospace;font-size:12.5px;line-height:12.5px;letter-spacing:-0.5px;white-space:pre"><span style="color:#000000">}</span></div>
<div class="a" style="left:154px;top:150.42px;font-family:'Liberation Mono', monospace;font-size:12.5px;line-height:12.5px;letter-spacing:-0.5px;white-space:pre"><span style="color:#000000">}</span></div>
<span class="a t" id="t39" style="transform:scaleX(1.0462);left:154px;top:180.53px;font-size:10px;line-height:10px;color:#8a8a8a;">1 reference | 0 changes | 0 authors, 0 changes</span>
<div class="a" style="left:154px;top:195.42px;font-family:'Liberation Mono', monospace;font-size:12.5px;line-height:12.5px;letter-spacing:-0.5px;white-space:pre"><span style="color:#0000ff">private</span><span style="color:#000000"> </span><span style="color:#0000ff">void</span><span style="color:#000000"> </span><span style="color:#74531f">ExecuteComandsForCheckingVersion</span><span style="color:#000000">()</span></div>
<div class="a" style="left:154px;top:211.42px;font-family:'Liberation Mono', monospace;font-size:12.5px;line-height:12.5px;letter-spacing:-0.5px;white-space:pre"><span style="color:#ffffff">{</span></div>
<div class="a" style="left:182px;top:227.42px;font-family:'Liberation Mono', monospace;font-size:12.5px;line-height:12.5px;letter-spacing:-0.5px;white-space:pre"><span style="color:#2b91af">PSCredential</span><span style="color:#000000"> </span><span style="color:#8d92b4">credential</span><span style="color:#000000"> = </span><span style="color:#0000ff">new</span><span style="color:#000000"> </span><span style="color:#2b91af">PSCredential</span><span style="color:#000000">(_userName, _securePassword);</span></div>
<div class="a" style="left:182px;top:259.42px;font-family:'Liberation Mono', monospace;font-size:12.5px;line-height:12.5px;letter-spacing:-0.5px;white-space:pre"><span style="color:#008000">//connectionInfo.AuthenticationMechanism = AuthenticationMechanism.Kerberos;</span></div>
<div class="a" style="left:182px;top:275.42px;font-family:'Liberation Mono', monospace;font-size:12.5px;line-height:12.5px;letter-spacing:-0.5px;white-space:pre"><span style="color:#008000">//InitialSessionState initialSession = InitialSessionState.CreateDefault();</span></div>
<div class="a" style="left:182px;top:291.42px;font-family:'Liberation Mono', monospace;font-size:12.5px;line-height:12.5px;letter-spacing:-0.5px;white-space:pre"><span style="color:#008000">//if (!_useTrialMode)</span></div>
<div class="a" style="left:182px;top:307.42px;font-family:'Liberation Mono', monospace;font-size:12.5px;line-height:12.5px;letter-spacing:-0.5px;white-space:pre"><span style="color:#008000">//{</span></div>
<div class="a" style="left:182px;top:323.42px;font-family:'Liberation Mono', monospace;font-size:12.5px;line-height:12.5px;letter-spacing:-0.5px;white-space:pre"><span style="color:#008000">//    //initialSession.ImportPSModule(new[] { "MSOnline" });</span></div>
<div class="a" style="left:182px;top:339.42px;font-family:'Liberation Mono', monospace;font-size:12.5px;line-height:12.5px;letter-spacing:-0.5px;white-space:pre"><span style="color:#008000">//}</span></div>
<div class="a" style="left:182px;top:371.42px;font-family:'Liberation Mono', monospace;font-size:12.5px;line-height:12.5px;letter-spacing:-0.5px;white-space:pre"><span style="color:#0000ff">using</span><span style="color:#000000"> (</span><span style="color:#2b91af">Runspace</span><span style="color:#000000"> </span><span style="color:#1f377f">runspace</span><span style="color:#000000"> = </span><span style="color:#2b91af">RunspaceFactory</span><span style="color:#000000">.</span><span style="color:#74531f">CreateRunspace</span><span style="color:#000000">())</span></div>
<div class="a" style="left:182px;top:387.42px;font-family:'Liberation Mono', monospace;font-size:12.5px;line-height:12.5px;letter-spacing:-0.5px;white-space:pre"><span style="color:#000000">{</span></div>
<div class="a" style="left:210px;top:403.42px;font-family:'Liberation Mono', monospace;font-size:12.5px;line-height:12.5px;letter-spacing:-0.5px;white-space:pre"><span style="color:#1f377f">runspace</span><span style="color:#000000">.</span><span style="color:#74531f">Open</span><span style="color:#000000">();</span></div>
<div class="a" style="left:210px;top:419.42px;font-family:'Liberation Mono', monospace;font-size:12.5px;line-height:12.5px;letter-spacing:-0.5px;white-space:pre"><span style="color:#0000ff">using</span><span style="color:#000000"> (</span><span style="color:#2b91af">PowerShell</span><span style="color:#000000"> </span><span style="color:#1f377f">ps</span><span style="color:#000000"> = </span><span style="color:#2b91af">PowerShell</span><span style="color:#000000">.</span><span style="color:#74531f">Create</span><span style="color:#000000">())</span></div>
<div class="a" style="left:210px;top:435.42px;font-family:'Liberation Mono', monospace;font-size:12.5px;line-height:12.5px;letter-spacing:-0.5px;white-space:pre"><span style="color:#ffffff">{</span></div>
<div class="a" style="left:238px;top:451.42px;font-family:'Liberation Mono', monospace;font-size:12.5px;line-height:12.5px;letter-spacing:-0.5px;white-space:pre"><span style="color:#1f377f">ps</span><span style="color:#000000">.Runspace = </span><span style="color:#1f377f">runspace</span><span style="color:#000000">;</span></div>
<div class="a" style="left:238px;top:483.42px;font-family:'Liberation Mono', monospace;font-size:12.5px;line-height:12.5px;letter-spacing:-0.5px;white-space:pre"><span style="color:#1f377f">ps</span><span style="color:#000000">.Commands.</span><span style="color:#74531f">AddCommand</span><span style="color:#000000">(</span><span style="color:#0000ff">new</span><span style="color:#000000"> </span><span style="color:#2b91af">Command</span><span style="color:#000000">(</span><span style="color:#a31515">"[Environment]::Is64BitProcess"</span><span style="color:#000000">, </span><span style="color:#0000ff">true</span><span style="color:#000000">));</span></div>
<div class="a" style="left:238px;top:515.42px;font-family:'Liberation Mono', monospace;font-size:12.5px;line-height:12.5px;letter-spacing:-0.5px;white-space:pre"><span style="color:#ffffff">var processResult = ps.Invoke();</span></div>
<div class="a" style="left:210px;top:531.42px;font-family:'Liberation Mono', monospace;font-size:12.5px;line-height:12.5px;letter-spacing:-0.5px;white-space:pre"><span style="color:#000000">}</span></div>
<div class="a" style="left:182px;top:547.42px;font-family:'Liberation Mono', monospace;font-size:12.5px;line-height:12.5px;letter-spacing:-0.5px;white-space:pre"><span style="color:#000000">}</span></div>
<div class="a" style="left:154px;top:563.42px;font-family:'Liberation Mono', monospace;font-size:12.5px;line-height:12.5px;letter-spacing:-0.5px;white-space:pre"><span style="color:#000000">}</span></div>
<div class="a" style="left:274px;top:237px;width:10px;height:2px;background:repeating-linear-gradient(90deg,#9a9a9a 0 2px,transparent 2px 4px)"></div>
<span class="a t" id="t40" style="transform:scaleX(0.9929);left:226px;top:530.69px;font-size:11px;line-height:11px;color:#8a8a8a;">≤20ms elapsed</span>
<div class="a" style="left:311px;top:526px;width:207px;height:20px;background:#cdd5e4;border:1px solid #aab3c8;box-shadow:2px 2px 2px rgba(0,0,0,0.18);"></div>
<div class="a" style="left:312px;top:527px;width:16px;height:18px;background:#e4e8f0;"></div>
<svg class="a" style="left:315px;top:531px;" width="7" height="7" viewBox="0 0 7 7"><path d="M6.5 0.5 V6.5 H0.5 Z" fill="#333"/></svg>
<svg class="a" style="left:328px;top:529px;" width="12" height="12" viewBox="0 0 12 12"><path d="M6 0.5 L11 3 V9 L6 11.5 L1 9 V3 Z" fill="#1e5fb3"/><path d="M1 3 L6 5.5 L11 3 M6 5.5 V11.5" stroke="#fff" stroke-width="0.8" fill="none"/></svg>
<span class="a t" id="t41" style="transform:scaleX(0.9470);left:347px;top:528.84px;font-size:12px;line-height:12px;color:#1e1e1e;">processResult</span>
<div class="a" style="left:437px;top:527px;width:1px;height:17px;background:#a9b1c6;"></div>
<span class="a t" id="t42" style="transform:scaleX(0.9737);left:443px;top:528.84px;font-size:12px;line-height:12px;color:#1e1e1e;">Count = 1</span>
<svg class="a" style="left:502px;top:530px;" width="12" height="10" viewBox="0 0 12 10"><path d="M0 5 H4 M4 1.5 V8.5 M4 2.5 H10 V7.5 H4" stroke="#555" fill="none"/></svg>
<div class="a" style="left:327px;top:545px;width:151px;height:34px;background:#ffffff;border:1px solid #aab3c8;box-shadow:2px 2px 2px rgba(0,0,0,0.18);"></div>
<div class="a" style="left:432px;top:546px;width:1px;height:32px;background:#d0d4de;"></div>
<svg class="a" style="left:333px;top:549px;" width="5" height="8" viewBox="0 0 5 8"><path d="M0.5 0.5 L4.5 4 L0.5 7.5 Z" fill="none" stroke="#333"/></svg>
<svg class="a" style="left:345px;top:547px;" width="12" height="12" viewBox="0 0 12 12"><path d="M6 0.5 L11 3 V9 L6 11.5 L1 9 V3 Z" fill="#1e5fb3"/><path d="M1 3 L6 5.5 L11 3 M6 5.5 V11.5" stroke="#fff" stroke-width="0.8" fill="none"/></svg>
<svg class="a" style="left:333px;top:565px;" width="5" height="8" viewBox="0 0 5 8"><path d="M0.5 0.5 L4.5 4 L0.5 7.5 Z" fill="none" stroke="#333"/></svg>
<svg class="a" style="left:345px;top:563px;" width="12" height="12" viewBox="0 0 12 12"><path d="M6 0.5 L11 3 V9 L6 11.5 L1 9 V3 Z" fill="#1e5fb3"/><path d="M1 3 L6 5.5 L11 3 M6 5.5 V11.5" stroke="#fff" stroke-width="0.8" fill="none"/></svg>
<span class="a t" id="t43" style="transform:scaleX(1.0492);left:364px;top:546.84px;font-size:12px;line-height:12px;color:#1e1e1e;">[0]</span>
<span class="a t" id="t44" style="transform:scaleX(0.9409);left:364px;top:562.84px;font-size:12px;line-height:12px;color:#1e1e1e;">Raw View</span>
<span class="a t" id="t45" style="transform:scaleX(0.9101);left:437px;top:546.84px;font-size:12px;line-height:12px;color:#1e1e1e;">{False}</span>
</div></div>
<div class="a" style="left:1168px;top:140px;width:23px;height:439px;background:#e8e8ec;"></div>
<svg class="a" style="left:1175px;top:146px;" width="10" height="5" viewBox="0 0 10 5"><path d="M0 5 L5 0 L10 5 Z" fill="#868999"/></svg>
<svg class="a" style="left:1175px;top:567px;" width="10" height="5" viewBox="0 0 10 5"><path d="M0 0 L5 5 L10 0 Z" fill="#868999"/></svg>
<div class="a" style="left:1186px;top:162px;width:5px;height:7px;background:#a6a6a6;"></div>
<div class="a" style="left:1186px;top:233px;width:5px;height:7px;background:#a6a6a6;"></div>
<div class="a" style="left:1186px;top:450px;width:5px;height:7px;background:#a6a6a6;"></div>
<div class="a" style="left:1180px;top:191px;width:5px;height:6px;background:#963b45;"></div>
<div class="a" style="left:1180px;top:199px;width:5px;height:6px;background:#963b45;"></div>
<div class="a" style="left:1174px;top:493px;width:17px;height:11px;background:#c9cad0;"></div>
<div class="a" style="left:1186px;top:493px;width:5px;height:6px;background:#a6a6a6;"></div>
<div class="a" style="left:1168px;top:493px;width:5px;height:15px;background:#6ce16c;"></div>
<div class="a" style="left:1180px;top:493px;width:5px;height:5px;background:#963b45;"></div>
<div class="a" style="left:1180px;top:499px;width:5px;height:6px;background:#963b45;"></div>
<div class="a" style="left:1180px;top:507px;width:5px;height:6px;background:#963b45;"></div>
<div class="a" style="left:1180px;top:528px;width:5px;height:6px;background:#963b45;"></div>
<div class="a" style="left:1180px;top:548px;width:5px;height:6px;background:#963b45;"></div>
<div class="a" style="left:1168px;top:499px;width:23px;height:2px;background:#1010c8;"></div>
<div class="a" style="left:7px;top:579px;width:1184px;height:17px;background:#e8e8ec;"></div>
<div class="a" style="left:7px;top:579px;width:59px;height:17px;background:#ffffff;border:1px solid #c9cede;"></div>
<span class="a t" id="t46" style="transform:scaleX(0.8522);left:10px;top:581.84px;font-size:12px;line-height:12px;color:#1e1e1e;">100 %</span>
<svg class="a" style="left:59px;top:587px;" width="6" height="3" viewBox="0 0 6 3"><path d="M0 0 H6 L3 3 Z" fill="#1e1e1e"/></svg>
<svg class="a" style="left:92px;top:582px;" width="10" height="10" viewBox="0 0 10 10"><circle cx="5" cy="5" r="5" fill="#388a34"/><path d="M2.5 5 L4.3 7 L7.7 3" stroke="#fff" stroke-width="1.4" fill="none"/></svg>
<span class="a t" id="t47" style="transform:scaleX(0.9760);left:107px;top:581.84px;font-size:12px;line-height:12px;color:#1e1e1e;">No issues found</span>
<div class="a" style="left:249px;top:581px;width:1px;height:13px;background:#c2c5d0;"></div>
<svg class="a" style="left:265px;top:581px;" width="12" height="12" viewBox="0 0 12 12"><path d="M7.5 4 L11 0.8" stroke="#333" stroke-width="1.3"/><path d="M3.5 5 C5 2.5 8.5 2.5 10 5.5 L7 8.5 Z" fill="#333"/><path d="M3.5 5.5 L1 8 L4.5 11.5 L7 9" fill="none" stroke="#333" stroke-width="1.1"/><path d="M2.8 9.5 L4.5 8" stroke="#333" stroke-width="0.8"/></svg>
<svg class="a" style="left:281px;top:585px;" width="7" height="4" viewBox="0 0 7 4"><path d="M0 0 H7 L3.5 4 Z" fill="#1e1e1e"/></svg>
<svg class="a" style="left:318px;top:584px;" width="5" height="8" viewBox="0 0 5 8"><path d="M5 0 V8 L0 4 Z" fill="#868999"/></svg>
<div class="a" style="left:329px;top:583px;width:614px;height:9px;background:#c2c3c9;"></div>
<svg class="a" style="left:973px;top:584px;" width="5" height="8" viewBox="0 0 5 8"><path d="M0 0 V8 L5 4 Z" fill="#868999"/></svg>
<span class="a t" id="t48" style="transform:scaleX(0.8990);left:1006px;top:581.84px;font-size:12px;line-height:12px;color:#1e1e1e;">Ln: 1068</span>
<span class="a t" id="t49" style="transform:scaleX(0.9050);left:1066px;top:581.84px;font-size:12px;line-height:12px;color:#1e1e1e;">Ch: 18</span>
<span class="a t" id="t50" style="transform:scaleX(0.8101);left:1117px;top:582.84px;font-size:12px;line-height:12px;color:#1e1e1e;">SPC</span>
<span class="a t" id="t51" style="transform:scaleX(0.7976);left:1156px;top:582.84px;font-size:12px;line-height:12px;color:#1e1e1e;">CRLF</span>
<div class="a" style="left:1199px;top:98px;width:305px;height:498px;background:#f9fafe;"></div>
<div class="a" style="left:1199px;top:146px;width:288px;height:258px;background:#f8f9fe;"></div>
<div class="a" style="left:1199px;top:98px;width:305px;height:21px;background:#3f5189;"></div>
<span class="a t" id="t52" style="transform:scaleX(0.9866);left:1203px;top:102.84px;font-size:12px;line-height:12px;color:#ffffff;">Diagnostic Tools</span>
<svg class="a" style="left:1456px;top:106px;" width="9" height="5" viewBox="0 0 9 5"><path d="M0 0 H9 L4.5 5 Z" fill="#c6cde3"/></svg>
<svg class="a" style="left:1472px;top:102px;" width="9" height="12" viewBox="0 0 9 12"><path d="M2 0.5 H7 M2.5 0.5 V7 M6.5 0.5 V7 M0.5 7.5 H8.5 M4.5 7.5 V12" stroke="#c8cfe6" fill="none"/></svg>
<svg class="a" style="left:1488px;top:103px;" width="10" height="10" viewBox="0 0 10 10"><path d="M0.5 0.5 L9.5 9.5 M9.5 0.5 L0.5 9.5" stroke="#c8cfe6" stroke-width="1.3"/></svg>
<div class="a" style="left:1199px;top:119px;width:288px;height:27px;background:#ccd5f0;"></div>
<svg class="a" style="left:1210px;top:125px;" width="14" height="14" viewBox="0 0 14 14"><circle cx="7.0" cy="7.0" r="5.04" fill="#333333"/><rect x="5.6" y="0" width="2.8000000000000003" height="4.2" fill="#333333" transform="rotate(0 7.0 7.0)"/><rect x="5.6" y="0" width="2.8000000000000003" height="4.2" fill="#333333" transform="rotate(45 7.0 7.0)"/><rect x="5.6" y="0" width="2.8000000000000003" height="4.2" fill="#333333" transform="rotate(90 7.0 7.0)"/><rect x="5.6" y="0" width="2.8000000000000003" height="4.2" fill="#333333" transform="rotate(135 7.0 7.0)"/><rect x="5.6" y="0" width="2.8000000000000003" height="4.2" fill="#333333" transform="rotate(180 7.0 7.0)"/><rect x="5.6" y="0" width="2.8000000000000003" height="4.2" fill="#333333" transform="rotate(225 7.0 7.0)"/><rect x="5.6" y="0" width="2.8000000000000003" height="4.2" fill="#333333" transform="rotate(270 7.0 7.0)"/><rect x="5.6" y="0" width="2.8000000000000003" height="4.2" fill="#333333" transform="rotate(315 7.0 7.0)"/><circle cx="7.0" cy="7.0" r="2.3800000000000003" fill="#ffffff"/></svg>
<div class="a" style="left:1236px;top:122px;width:1px;height:22px;background:#9aa6c9;"></div>
<svg class="a" style="left:1243px;top:125px;" width="16" height="14" viewBox="0 0 16 14"><path d="M8 0.5 H0.5 V13.5 H8" stroke="#333" fill="none"/><path d="M4 7 H13 M9.5 3.5 L13 7 L9.5 10.5" stroke="#1e5fb3" stroke-width="1.6" fill="none"/></svg>
<div class="a" style="left:1270px;top:122px;width:1px;height:22px;background:#9aa6c9;"></div>
<svg class="a" style="left:1277px;top:125px;" width="14" height="14" viewBox="0 0 14 14"><circle cx="5.5" cy="5.5" r="4.5" fill="none" stroke="#333" stroke-width="1.2"/><path d="M3 5.5 H8 M5.5 3 V8" stroke="#333"/><path d="M9 9 L13 13" stroke="#333" stroke-width="2"/></svg>
<svg class="a" style="left:1302px;top:125px;" width="14" height="14" viewBox="0 0 14 14"><circle cx="5.5" cy="5.5" r="4.5" fill="none" stroke="#333" stroke-width="1.2"/><path d="M3 5.5 H8" stroke="#333"/><path d="M9 9 L13 13" stroke="#333" stroke-width="2"/></svg>
<svg class="a" style="left:1327px;top:124px;" width="15" height="16" viewBox="0 0 15 16"><path d="M2 3 C2 0 7 0 5 4" stroke="#1e5fb3" fill="none" stroke-width="1.3"/><rect x="3" y="7" width="2" height="8" fill="#333"/><rect x="7" y="9" width="2" height="6" fill="#333"/><rect x="11" y="5" width="2" height="10" fill="#333"/><rect x="0" y="6" width="1.5" height="9" fill="#333"/></svg>
<span class="a t" id="t53" style="transform:scaleX(0.9912);left:1209px;top:150.84px;font-size:12px;line-height:12px;color:#1e1e1e;-webkit-text-stroke:0.4px #1e1e1e;">Diagnostics session: 2:19 minutes (224 ms selecte...</span>
<div class="a" style="left:1235px;top:168px;width:161px;height:22px;background:#e0e0e4;"></div>
<div class="a" style="left:1235px;top:168px;width:1px;height:22px;background:#a9b3c6;"></div>
<div class="a" style="left:1285px;top:168px;width:1px;height:22px;background:#b8bfcc;"></div>
<span class="a t" id="t54" style="transform:scaleX(0.9677);left:1288px;top:170.84px;font-size:12px;line-height:12px;color:#808080;">2:19.2min</span>
<div class="a" style="left:1199px;top:167px;width:289px;height:1px;background:#b8bfcc;"></div>
<div class="a" style="left:1394px;top:168px;width:5px;height:22px;background:#000000;"></div>
<div class="a" style="left:1422px;top:168px;width:1px;height:22px;background:#a9b3c6;"></div>
<div class="a" style="left:1450px;top:168px;width:1px;height:22px;background:#a9b3c6;"></div>
<span class="a t" id="t55" style="transform:scaleX(0.9362);left:1425px;top:170.84px;font-size:12px;line-height:12px;color:#1e1e1e;">2:19.</span>
<div class="a" style="left:1244px;top:185px;width:1px;height:5px;background:#a9b3c6;"></div>
<div class="a" style="left:1258px;top:185px;width:1px;height:5px;background:#a9b3c6;"></div>
<div class="a" style="left:1272px;top:185px;width:1px;height:5px;background:#a9b3c6;"></div>
<div class="a" style="left:1299px;top:185px;width:1px;height:5px;background:#a9b3c6;"></div>
<div class="a" style="left:1313px;top:185px;width:1px;height:5px;background:#a9b3c6;"></div>
<div class="a" style="left:1327px;top:185px;width:1px;height:5px;background:#a9b3c6;"></div>
<div class="a" style="left:1341px;top:185px;width:1px;height:5px;background:#a9b3c6;"></div>
<div class="a" style="left:1354px;top:182px;width:1px;height:8px;background:#a9b3c6;"></div>
<div class="a" style="left:1368px;top:185px;width:1px;height:5px;background:#a9b3c6;"></div>
<div class="a" style="left:1382px;top:185px;width:1px;height:5px;background:#a9b3c6;"></div>
<div class="a" style="left:1396px;top:185px;width:1px;height:5px;background:#a9b3c6;"></div>
<div class="a" style="left:1410px;top:185px;width:1px;height:5px;background:#a9b3c6;"></div>
<div class="a" style="left:1423px;top:185px;width:1px;height:5px;background:#a9b3c6;"></div>
<div class="a" style="left:1437px;top:185px;width:1px;height:5px;background:#a9b3c6;"></div>
<div class="a" style="left:1199px;top:190px;width:289px;height:1px;background:#b8b8b8;"></div>
<svg class="a" style="left:1205px;top:198px;" width="8" height="8" viewBox="0 0 8 8"><path d="M8 0 V8 H0 Z" fill="#444"/></svg>
<span class="a t" id="t56" style="transform:scaleX(0.9540);left:1216px;top:195.84px;font-size:12px;line-height:12px;color:#1e1e1e;">Events</span>
<div class="a" style="left:1235px;top:211px;width:216px;height:23px;background:#ffffff;border:1px solid #b4bccb;"></div>
<div class="a" style="left:1236px;top:212px;width:162px;height:21px;background:#e0e0e4;"></div>
<div class="a" style="left:1236px;top:216px;width:214px;height:14px;background:#707070;"></div>
<div class="a" style="left:1285px;top:212px;width:1px;height:4px;background:#b4bccb;"></div>
<div class="a" style="left:1285px;top:230px;width:1px;height:2px;background:#b4bccb;"></div>
<div class="a" style="left:1398px;top:211px;width:1px;height:22px;background:#ffffff;"></div>
<div class="a" style="left:1422px;top:211px;width:1px;height:23px;background:#b4bccb;"></div>
<div class="a" style="left:1219px;top:218px;width:3px;height:8px;background:#333;"></div>
<div class="a" style="left:1224px;top:218px;width:3px;height:8px;background:#333;"></div>
<svg class="a" style="left:1205px;top:241px;" width="8" height="8" viewBox="0 0 8 8"><path d="M8 0 V8 H0 Z" fill="#444"/></svg>
<span class="a t" id="t57" style="transform:scaleX(0.9971);left:1216px;top:238.84px;font-size:12px;line-height:12px;color:#1e1e1e;">Process Memory (MB)</span>
<svg class="a" style="left:1391px;top:237px;" width="8" height="12" viewBox="0 0 8 12"><path d="M0 0 H8 V4 L4 12 L0 4 Z" fill="#f6b31b"/></svg>
<svg class="a" style="left:1412px;top:238px;" width="12" height="10" viewBox="0 0 12 10"><path d="M0 0 H12 L6 10 Z" fill="#1e6fc8"/></svg>
<svg class="a" style="left:1437px;top:237px;" width="12" height="12" viewBox="0 0 12 12"><circle cx="6" cy="6" r="5.7" fill="#7fb3cf"/></svg>
<div class="a" style="left:1235px;top:254px;width:216px;height:70px;background:#b8c9d4;border:1px solid #a8b0bc;"></div>
<div class="a" style="left:1236px;top:255px;width:161px;height:8px;background:#dcdfe3;"></div>
<div class="a" style="left:1398px;top:255px;width:52px;height:68px;background:#f8f9fe;"></div>
<svg class="a" style="left:1398px;top:261px;" width="52" height="62" viewBox="0 0 52 62"><path d="M0 2 L52 0 V62 H0 Z" fill="#a2c8dc"/><path d="M0 2 L52 0" stroke="#7fb3cf"/></svg>
<div class="a" style="left:1285px;top:255px;width:1px;height:68px;background:#98a8b4;"></div>
<div class="a" style="left:1422px;top:255px;width:1px;height:68px;background:#8fb0c4;"></div>
<div class="a" style="left:1236px;top:263px;width:161px;height:1px;background:#a8c2d0;"></div>
<span class="a t" id="t58" style="transform:scaleX(0.9984);left:1210px;top:256.84px;font-size:12px;line-height:12px;color:#1e1e1e;">299</span>
<span class="a t" id="t59" style="transform:scaleX(1.0467);left:1223px;top:309.84px;font-size:12px;line-height:12px;color:#1e1e1e;">0</span>
<span class="a t" id="t60" style="transform:scaleX(0.9984);left:1456px;top:256.84px;font-size:12px;line-height:12px;color:#1e1e1e;">299</span>
<span class="a t" id="t61" style="transform:scaleX(1.0467);left:1456px;top:309.84px;font-size:12px;line-height:12px;color:#1e1e1e;">0</span>
<svg class="a" style="left:1205px;top:331px;" width="8" height="8" viewBox="0 0 8 8"><path d="M8 0 V8 H0 Z" fill="#444"/></svg>
<span class="a t" id="t62" style="transform:scaleX(0.9779);left:1216px;top:328.84px;font-size:12px;line-height:12px;color:#1e1e1e;">CPU (% of all processors)</span>
<div class="a" style="left:1235px;top:345px;width:216px;height:59px;background:#ffffff;border:1px solid #a8b0bc;"></div>
<div class="a" style="left:1236px;top:346px;width:162px;height:58px;background:#e0e0e4;"></div>
<div class="a" style="left:1285px;top:346px;width:1px;height:58px;background:#a8a8b0;"></div>
<div class="a" style="left:1422px;top:346px;width:1px;height:58px;background:#8aa0b8;"></div>
<svg class="a" style="left:1400px;top:380px;" width="50" height="24" viewBox="0 0 50 24"><path d="M12 24 L18 14 L22 10 L26 6 L30 16 L36 24 Z" fill="#9ec8de" stroke="#7fb3cf"/><path d="M38 24 L42 14 L46 16 L50 14 V24 Z" fill="#9ec8de"/></svg>
<span class="a t" id="t63" style="transform:scaleX(0.9984);left:1211px;top:345.84px;font-size:12px;line-height:12px;color:#1e1e1e;">100</span>
<span class="a t" id="t64" style="transform:scaleX(0.9984);left:1456px;top:345.84px;font-size:12px;line-height:12px;color:#1e1e1e;">100</span>
<div class="a" style="left:1487px;top:119px;width:17px;height:285px;background:#e8e8ec;"></div>
<svg class="a" style="left:1489px;top:136px;" width="13" height="8" viewBox="0 0 13 8"><path d="M1 7 L6.5 1.5 L12 7" stroke="#868999" stroke-width="2.2" fill="none"/></svg>
<div class="a" style="left:1490px;top:153px;width:12px;height:195px;background:#c2c3c9;"></div>
<svg class="a" style="left:1489px;top:376px;" width="13" height="8" viewBox="0 0 13 8"><path d="M1 1 L6.5 6.5 L12 1" stroke="#868999" stroke-width="2.2" fill="none"/></svg>
<div class="a" style="left:1199px;top:403px;width:305px;height:3px;background:#d3d4d8;"></div>
<div class="a" style="left:1203px;top:410px;width:63px;height:18px;background:#dee3f3;"></div>
<div class="a" style="left:1199px;top:428px;width:305px;height:2px;background:#e6eaf6;"></div>
<span class="a t" id="t65" style="transform:scaleX(0.9933);left:1209px;top:413.84px;font-size:12px;line-height:12px;color:#1e1e1e;">Summary</span>
<span class="a t" id="t66" style="transform:scaleX(0.9267);left:1272px;top:413.84px;font-size:12px;line-height:12px;color:#1e1e1e;">Events</span>
<span class="a t" id="t67" style="transform:scaleX(0.9833);left:1318px;top:413.84px;font-size:12px;line-height:12px;color:#1e1e1e;">Memory Usage</span>
<span class="a t" id="t68" style="transform:scaleX(0.9154);left:1410px;top:413.84px;font-size:12px;line-height:12px;color:#1e1e1e;">CPU Usage</span>
<div class="a" style="left:1199px;top:430px;width:305px;height:1px;background:#cdd0d8;"></div>
<div class="a" style="left:1199px;top:431px;width:305px;height:22px;background:#f2f2f2;"></div>
<div class="a" style="left:1199px;top:453px;width:305px;height:1px;background:#d9d9d9;"></div>
<div class="a" style="left:1199px;top:430px;width:305px;height:1px;background:#d9d9d9;"></div>
<span class="a t" id="t69" style="transform:scaleX(0.9540);left:1208px;top:436.84px;font-size:12px;line-height:12px;color:#1e1e1e;-webkit-text-stroke:0.45px #1e1e1e;">Events</span>
<div class="a" style="left:1199px;top:482px;width:305px;height:23px;background:#f2f2f2;"></div>
<div class="a" style="left:1199px;top:505px;width:305px;height:1px;background:#d9d9d9;"></div>
<div class="a" style="left:1199px;top:481px;width:305px;height:1px;background:#d9d9d9;"></div>
<span class="a t" id="t70" style="transform:scaleX(1.0079);left:1208px;top:488.84px;font-size:12px;line-height:12px;color:#1e1e1e;-webkit-text-stroke:0.45px #1e1e1e;">Memory Usage</span>
<div class="a" style="left:1199px;top:534px;width:305px;height:23px;background:#f2f2f2;"></div>
<div class="a" style="left:1199px;top:557px;width:305px;height:1px;background:#d9d9d9;"></div>
<div class="a" style="left:1199px;top:533px;width:305px;height:1px;background:#d9d9d9;"></div>
<span class="a t" id="t71" style="transform:scaleX(0.9312);left:1208px;top:540.84px;font-size:12px;line-height:12px;color:#1e1e1e;-webkit-text-stroke:0.45px #1e1e1e;">CPU Usage</span>
<svg class="a" style="left:1214px;top:465px;" width="13" height="6" viewBox="0 0 13 6"><circle cx="2.2" cy="3" r="1.8" fill="none" stroke="#666"/><circle cx="6.5" cy="3" r="1.8" fill="none" stroke="#666"/><circle cx="10.8" cy="3" r="1.8" fill="none" stroke="#666"/></svg>
<span class="a t" id="t72" style="transform:scaleX(0.8529);left:1235px;top:462.84px;font-size:12px;line-height:12px;color:#1e1e1e;">Show Events (2 of 4)</span>
<svg class="a" style="left:1214px;top:515px;" width="12" height="10" viewBox="0 0 12 10"><path d="M0 2 H3 L4 0 H8 L9 2 H12 V10 H0 Z" fill="#444"/><circle cx="6" cy="6" r="2.3" fill="#fff"/><circle cx="6" cy="6" r="1.3" fill="#444"/></svg>
<span class="a t" id="t73" style="transform:scaleX(0.9699);left:1235px;top:514.84px;font-size:12px;line-height:12px;color:#1e1e1e;">Take Snapshot</span>
<svg class="a" style="left:1215px;top:567px;" width="10" height="10" viewBox="0 0 10 10"><circle cx="5" cy="5" r="4.5" fill="#333"/></svg>
<span class="a t" id="t74" style="transform:scaleX(0.9551);left:1235px;top:566.84px;font-size:12px;line-height:12px;color:#1e1e1e;">Record CPU Profile</span>
<div class="a t" style="left:1525px;top:97px;font-size:12px;line-height:12px;color:#ffffff;transform:rotate(90deg) scaleX(0.99);transform-origin:0 0">Solution Explorer</div>
<div class="a t" style="left:1525px;top:199px;font-size:12px;line-height:12px;color:#ffffff;transform:rotate(90deg) scaleX(0.94);transform-origin:0 0">Git Changes</div>
<div class="a" style="left:1530px;top:97px;width:6px;height:90px;background:#3e5286;"></div>
<div class="a" style="left:1530px;top:199px;width:6px;height:64px;background:#3e5286;"></div>
<div class="a" style="left:7px;top:604px;width:742px;height:21px;background:#3f5189;"></div>
<span class="a t" id="t75" style="transform:scaleX(0.9638);left:11px;top:608.84px;font-size:12px;line-height:12px;color:#ffffff;">Watch 1</span>
<svg class="a" style="left:700px;top:612px;" width="9" height="5" viewBox="0 0 9 5"><path d="M0 0 H9 L4.5 5 Z" fill="#c6cde3"/></svg>
<svg class="a" style="left:716px;top:608px;" width="9" height="12" viewBox="0 0 9 12"><path d="M2 0.5 H7 M2.5 0.5 V7 M6.5 0.5 V7 M0.5 7.5 H8.5 M4.5 7.5 V12" stroke="#c8cfe6" fill="none"/></svg>
<svg class="a" style="left:733px;top:609px;" width="10" height="10" viewBox="0 0 10 10"><path d="M0.5 0.5 L9.5 9.5 M9.5 0.5 L0.5 9.5" stroke="#c8cfe6" stroke-width="1.3"/></svg>
<div class="a" style="left:7px;top:625px;width:742px;height:26px;background:#ccd5f0;"></div>
<div class="a" style="left:8px;top:627px;width:223px;height:20px;background:#f7f8fc;border:1px solid #c2c9dd;"></div>
<span class="a t" id="t76" style="transform:scaleX(0.9394);left:12px;top:630.84px;font-size:12px;line-height:12px;color:#717171;">Search (Ctrl+E)</span>
<svg class="a" style="left:204px;top:631px;" width="12" height="12" viewBox="0 0 12 12"><circle cx="7.5" cy="4.5" r="3.5" fill="none" stroke="#555" stroke-width="1.5"/><path d="M5 7 L1 11" stroke="#555" stroke-width="2"/></svg>
<svg class="a" style="left:222px;top:636px;" width="6" height="3" viewBox="0 0 6 3"><path d="M0 0 H6 L3 3 Z" fill="#555"/></svg>
<svg class="a" style="left:240px;top:632px;" width="14" height="11" viewBox="0 0 14 11"><path d="M13 5.5 H1.5 M6 1 L1.5 5.5 L6 10" stroke="#9aa3bf" stroke-width="1.3" fill="none"/></svg>
<svg class="a" style="left:261px;top:632px;" width="14" height="11" viewBox="0 0 14 11"><path d="M1 5.5 H12.5 M8 1 L12.5 5.5 L8 10" stroke="#9aa3bf" stroke-width="1.3" fill="none"/></svg>
<span class="a t" id="t77" style="transform:scaleX(0.9385);left:283px;top:632.84px;font-size:12px;line-height:12px;color:#1e1e1e;">Search Depth:</span>
<div class="a" style="left:362px;top:628px;width:40px;height:19px;background:#f3f5fc;"></div>
<span class="a t" id="t78" style="transform:scaleX(1.0467);left:365px;top:632.84px;font-size:12px;line-height:12px;color:#1e1e1e;">3</span>
<svg class="a" style="left:393px;top:637px;" width="6" height="3" viewBox="0 0 6 3"><path d="M0 0 H6 L3 3 Z" fill="#1e1e1e"/></svg>
<div class="a" style="left:409px;top:629px;width:1px;height:16px;background:#9aa6c9;"></div>
<svg class="a" style="left:417px;top:631px;" width="14" height="14" viewBox="0 0 14 14"><rect x="2" y="0" width="4" height="6" fill="#333"/><path d="M0 6.5 H8 M4 6.5 V14" stroke="#333" stroke-width="1.3"/><path d="M7 0 H14 L11 4 V9 L9.5 8 V4 Z" fill="#333"/></svg>
<div class="a" style="left:435px;top:627px;width:22px;height:22px;background:#fbecc8;border:1px solid #e5a852;"></div>
<svg class="a" style="left:439px;top:630px;" width="16" height="16" viewBox="0 0 16 16"><rect x="2" y="0" width="4" height="6" fill="none" stroke="#333"/><path d="M0 6.5 H8 M4 6.5 V15" stroke="#333" stroke-width="1.2"/><rect x="5.5" y="7.5" width="9" height="7.5" fill="#fbecc8" stroke="#333"/><text x="10" y="13.5" font-size="6.5" font-family="Liberation Sans" fill="#333" text-anchor="middle">ab</text></svg>
<div class="a" style="left:7px;top:651px;width:725px;height:123px;background:#ffffff;"></div>
<div class="a" style="left:15px;top:651px;width:1px;height:19px;background:#c9d2e8;"></div>
<div class="a" style="left:254px;top:651px;width:1px;height:19px;background:#c9d2e8;"></div>
<div class="a" style="left:612px;top:651px;width:1px;height:19px;background:#c9d2e8;"></div>
<div class="a" style="left:7px;top:669px;width:725px;height:1px;background:#b7c3e0;"></div>
<span class="a t" id="t79" style="transform:scaleX(0.9995);left:21px;top:654.84px;font-size:12px;line-height:12px;color:#1e1e1e;">Name</span>
<span class="a t" id="t80" style="transform:scaleX(0.9727);left:260px;top:654.84px;font-size:12px;line-height:12px;color:#1e1e1e;">Value</span>
<span class="a t" id="t81" style="transform:scaleX(0.9610);left:618px;top:654.84px;font-size:12px;line-height:12px;color:#1e1e1e;">Type</span>
<div class="a" style="left:7px;top:671px;width:725px;height:17px;background:#efefef;"></div>
<span class="a t" id="t82" style="transform:scaleX(1.0064);left:19px;top:673.84px;font-size:12px;line-height:12px;color:#1e1e1e;font-style:italic;">Add item to watch</span>
<div class="a" style="left:732px;top:651px;width:17px;height:123px;background:#e8e8ec;"></div>
<svg class="a" style="left:736px;top:657px;" width="10" height="5" viewBox="0 0 10 5"><path d="M0 5 L5 0 L10 5 Z" fill="#c2c3c9"/></svg>
<svg class="a" style="left:736px;top:763px;" width="10" height="5" viewBox="0 0 10 5"><path d="M0 0 L5 5 L10 0 Z" fill="#c2c3c9"/></svg>
<div class="a" style="left:7px;top:774px;width:41px;height:19px;background:#3e5286;"></div>
<span class="a t" id="t83" style="transform:scaleX(1.0102);left:12px;top:777.84px;font-size:12px;line-height:12px;color:#ffffff;">Autos</span>
<div class="a" style="left:50px;top:774px;width:43px;height:19px;background:#3e5286;"></div>
<span class="a t" id="t84" style="transform:scaleX(0.9514);left:55px;top:777.84px;font-size:12px;line-height:12px;color:#ffffff;">Locals</span>
<div class="a" style="left:95px;top:774px;width:53px;height:20px;background:#f7f9fe;"></div>
<span class="a t" id="t85" style="transform:scaleX(0.9638);left:100px;top:777.84px;font-size:12px;line-height:12px;color:#1e1e1e;">Watch 1</span>
<div class="a" style="left:757px;top:604px;width:747px;height:21px;background:#3f5189;"></div>
<span class="a t" id="t86" style="transform:scaleX(0.9439);left:761px;top:608.84px;font-size:12px;line-height:12px;color:#ffffff;">Call Stack</span>
<svg class="a" style="left:1455px;top:612px;" width="9" height="5" viewBox="0 0 9 5"><path d="M0 0 H9 L4.5 5 Z" fill="#c6cde3"/></svg>
<svg class="a" style="left:1471px;top:608px;" width="9" height="12" viewBox="0 0 9 12"><path d="M2 0.5 H7 M2.5 0.5 V7 M6.5 0.5 V7 M0.5 7.5 H8.5 M4.5 7.5 V12" stroke="#c8cfe6" fill="none"/></svg>
<svg class="a" style="left:1488px;top:609px;" width="10" height="10" viewBox="0 0 10 10"><path d="M0.5 0.5 L9.5 9.5 M9.5 0.5 L0.5 9.5" stroke="#c8cfe6" stroke-width="1.3"/></svg>
<div class="a" style="left:757px;top:625px;width:747px;height:149px;background:#ffffff;"></div>
<div class="a" style="left:773px;top:625px;width:1px;height:19px;background:#c9d2e8;"></div>
<div class="a" style="left:1458px;top:625px;width:1px;height:19px;background:#c9d2e8;"></div>
<div class="a" style="left:757px;top:644px;width:731px;height:1px;background:#b7c3e0;"></div>
<span class="a t" id="t87" style="transform:scaleX(0.9995);left:779px;top:628.84px;font-size:12px;line-height:12px;color:#1e1e1e;">Name</span>
<span class="a t" id="t88" style="transform:scaleX(0.8988);left:1464px;top:628.84px;font-size:12px;line-height:12px;color:#1e1e1e;">Lang</span>
<div class="a" style="left:757px;top:645px;width:731px;height:18px;background:#efefef;"></div>
<div class="a" style="left:757px;top:662px;width:731px;height:1px;background:#e8e8e8;"></div>
<div class="a" style="left:773px;top:646px;width:1px;height:17px;background:#e8e8e8;"></div>
<div class="a" style="left:1458px;top:646px;width:1px;height:17px;background:#e8e8e8;"></div>
<span class="a t" id="t89" style="transform:scaleX(0.9680);left:778px;top:648.84px;font-size:12px;line-height:12px;color:#1e1e1e;">ahpOffice365Services.dll!ahpOffice365Services.Office365Management.ExecuteComandsForCheckingVersion() Line 1074</span>
<span class="a t" id="t90" style="transform:scaleX(0.9124);left:1464px;top:648.84px;font-size:12px;line-height:12px;color:#1e1e1e;">C#</span>
<div class="a" style="left:757px;top:679px;width:731px;height:1px;background:#e8e8e8;"></div>
<div class="a" style="left:773px;top:663px;width:1px;height:17px;background:#e8e8e8;"></div>
<div class="a" style="left:1458px;top:663px;width:1px;height:17px;background:#e8e8e8;"></div>
<span class="a t" id="t91" style="transform:scaleX(0.9760);left:778px;top:665.84px;font-size:12px;line-height:12px;color:#1e1e1e;">ahpOffice365Services.dll!ahpOffice365Services.Office365Management.ExcuteMsolCommands(System.Collections.Generic.List&lt;...</span>
<span class="a t" id="t92" style="transform:scaleX(0.9124);left:1464px;top:665.84px;font-size:12px;line-height:12px;color:#1e1e1e;">C#</span>
<div class="a" style="left:757px;top:696px;width:731px;height:1px;background:#e8e8e8;"></div>
<div class="a" style="left:773px;top:680px;width:1px;height:17px;background:#e8e8e8;"></div>
<div class="a" style="left:1458px;top:680px;width:1px;height:17px;background:#e8e8e8;"></div>
<span class="a t" id="t93" style="transform:scaleX(0.9672);left:778px;top:682.84px;font-size:12px;line-height:12px;color:#1e1e1e;">ahpOffice365Services.dll!ahpOffice365Services.Office365Management.ProviderStatus() Line 126</span>
<span class="a t" id="t94" style="transform:scaleX(0.9124);left:1464px;top:682.84px;font-size:12px;line-height:12px;color:#1e1e1e;">C#</span>
<div class="a" style="left:757px;top:713px;width:731px;height:1px;background:#e8e8e8;"></div>
<div class="a" style="left:773px;top:697px;width:1px;height:17px;background:#e8e8e8;"></div>
<div class="a" style="left:1458px;top:697px;width:1px;height:17px;background:#e8e8e8;"></div>
<span class="a t" id="t95" style="transform:scaleX(0.9665);left:778px;top:699.84px;font-size:12px;line-height:12px;color:#1e1e1e;">ahpProviderAHP.dll!ahpProviderAHP.BaseClasses.ahpProviderClass.CheckProvider(System.Collections.Generic.List&lt;ahpBaseCla...</span>
<span class="a t" id="t96" style="transform:scaleX(0.9124);left:1464px;top:699.84px;font-size:12px;line-height:12px;color:#1e1e1e;">C#</span>
<div class="a" style="left:757px;top:730px;width:731px;height:1px;background:#e8e8e8;"></div>
<div class="a" style="left:773px;top:714px;width:1px;height:17px;background:#e8e8e8;"></div>
<div class="a" style="left:1458px;top:714px;width:1px;height:17px;background:#e8e8e8;"></div>
<span class="a t" id="t97" style="transform:scaleX(0.9687);left:778px;top:716.84px;font-size:12px;line-height:12px;color:#1e1e1e;">ahpFrontendWCFService.dll!ahpFrontendWCFService.ServiceImplementation.AHPFrontendServiceV1.provider_CheckProvider(st...</span>
<span class="a t" id="t98" style="transform:scaleX(0.9124);left:1464px;top:716.84px;font-size:12px;line-height:12px;color:#1e1e1e;">C#</span>
<div class="a" style="left:757px;top:747px;width:731px;height:1px;background:#e8e8e8;"></div>
<div class="a" style="left:773px;top:731px;width:1px;height:17px;background:#e8e8e8;"></div>
<div class="a" style="left:1458px;top:731px;width:1px;height:17px;background:#e8e8e8;"></div>
<span class="a t" id="t99" style="transform:scaleX(0.9671);left:778px;top:733.84px;font-size:12px;line-height:12px;color:#8a8a8a;">[External Code]</span>
<svg class="a" style="left:760px;top:649px;" width="12" height="11" viewBox="0 0 12 11"><path d="M0.5 3 H5.5 V0.5 L11.5 5.5 L5.5 10.5 V8 H0.5 Z" fill="#ffe23d" stroke="#555" stroke-width="1"/></svg>
<div class="a" style="left:1488px;top:625px;width:16px;height:149px;background:#e8e8ec;"></div>
<svg class="a" style="left:1491px;top:632px;" width="10" height="5" viewBox="0 0 10 5"><path d="M0 5 L5 0 L10 5 Z" fill="#c2c3c9"/></svg>
<svg class="a" style="left:1491px;top:763px;" width="10" height="5" viewBox="0 0 10 5"><path d="M0 0 L5 5 L10 0 Z" fill="#c2c3c9"/></svg>
<div class="a" style="left:757px;top:774px;width:61px;height:20px;background:#f7f9fe;"></div>
<span class="a t" id="t100" style="transform:scaleX(0.9439);left:762px;top:777.84px;font-size:12px;line-height:12px;color:#1e1e1e;">Call Stack</span>
<div class="a" style="left:820px;top:774px;width:71px;height:19px;background:#3e5286;"></div>
<span class="a t" id="t101" style="transform:scaleX(0.9783);left:825px;top:777.84px;font-size:12px;line-height:12px;color:#ffffff;">Breakpoints</span>
<div class="a" style="left:893px;top:774px;width:107px;height:19px;background:#3e5286;"></div>
<span class="a t" id="t102" style="transform:scaleX(0.9657);left:899px;top:777.84px;font-size:12px;line-height:12px;color:#ffffff;">Exception Settings</span>
<div class="a" style="left:1002px;top:774px;width:115px;height:19px;background:#3e5286;"></div>
<span class="a t" id="t103" style="transform:scaleX(1.0259);left:1008px;top:777.84px;font-size:12px;line-height:12px;color:#ffffff;">Command Window</span>
<div class="a" style="left:1119px;top:774px;width:114px;height:19px;background:#3e5286;"></div>
<span class="a t" id="t104" style="transform:scaleX(1.0093);left:1125px;top:777.84px;font-size:12px;line-height:12px;color:#ffffff;">Immediate Window</span>
<div class="a" style="left:1235px;top:774px;width:48px;height:19px;background:#3e5286;"></div>
<span class="a t" id="t105" style="transform:scaleX(1.0546);left:1240px;top:777.84px;font-size:12px;line-height:12px;color:#ffffff;">Output</span>
<div class="a" style="left:0px;top:801px;width:1536px;height:23px;background:#a34d42;"></div>
<svg class="a" style="left:4px;top:806px;" width="16" height="12" viewBox="0 0 16 12"><path d="M4 0.5 H15 L12 11.5 H1 Z" fill="none" stroke="#fff" stroke-width="1.2"/></svg>
<span class="a t" id="t106" style="transform:scaleX(0.9225);left:28px;top:806.84px;font-size:12px;line-height:12px;color:#ffffff;">Ready</span>
<svg class="a" style="left:1186px;top:807px;" width="9" height="11" viewBox="0 0 9 11"><path d="M4.5 11 V1.5 M0.8 5 L4.5 1.3 L8.2 5" stroke="#fff" stroke-width="1.5" fill="none"/></svg>
<span class="a t" id="t107" style="transform:scaleX(1.0467);left:1204px;top:806.84px;font-size:12px;line-height:12px;color:#ffffff;">0</span>
<svg class="a" style="left:1235px;top:806px;" width="11" height="11" viewBox="0 0 11 11"><path d="M1 10 L2 7 L8 1 L10 3 L4 9 Z" fill="#fff"/></svg>
<span class="a t" id="t108" style="transform:scaleX(1.0467);left:1255px;top:806.84px;font-size:12px;line-height:12px;color:#ffffff;">9</span>
<svg class="a" style="left:1283px;top:806px;" width="14" height="14" viewBox="0 0 14 14"><path d="M7 0.5 L13.5 7 L7 13.5 L0.5 7 Z" fill="#fff"/><circle cx="6" cy="5" r="1.2" fill="#a34d42"/><circle cx="8" cy="9" r="1.2" fill="#a34d42"/><path d="M6 5 L8 9" stroke="#a34d42"/></svg>
<span class="a t" id="t109" style="transform:scaleX(0.9713);left:1305px;top:806.84px;font-size:12px;line-height:12px;color:#ffffff;">AHPOne</span>
<svg class="a" style="left:1373px;top:806px;" width="14" height="13" viewBox="0 0 14 13"><path d="M1.5 1 L7 7 L12.5 1 M7 7 V13" stroke="#fff" stroke-width="1.3" fill="none"/><circle cx="1.5" cy="1.5" r="1.3" fill="#fff"/><circle cx="12.5" cy="1.5" r="1.3" fill="#fff"/></svg>
<span class="a t" id="t110" style="transform:scaleX(0.9288);left:1395px;top:806.84px;font-size:12px;line-height:12px;color:#ffffff;">pod2_12748</span>
<svg class="a" style="left:1464px;top:809px;" width="8" height="5" viewBox="0 0 8 5"><path d="M0 5 L4 0 L8 5 Z" fill="#fff"/></svg>
<svg class="a" style="left:1497px;top:804px;" width="20" height="18" viewBox="0 0 20 18"><path d="M3 12 V7 C3 3 5 1.5 7.5 1.5 C10 1.5 12 3 12 7 V12 L13.5 13 H1.5 Z" fill="#e8c9c4"/><circle cx="13" cy="12" r="5" fill="#fff"/><text x="13" y="15.5" font-size="9" font-family="Liberation Sans" fill="#000" text-anchor="middle">3</text></svg>
<div class="a" style="left:0px;top:824px;width:1536px;height:40px;background:#101010;"></div>
<svg class="a" style="left:16px;top:836px;" width="17" height="17" viewBox="0 0 17 17"><path d="M0 2.2 L7 1.2 V8 H0 Z M8 1 L17 0 V8 H8 Z M0 9 H7 V15.8 L0 14.8 Z M8 9 H17 V17 L8 16 Z" fill="#fff"/></svg>
<div class="a" style="left:48px;top:825px;width:343px;height:39px;background:#f2f2f2;"></div>
<svg class="a" style="left:59px;top:835px;" width="19" height="19" viewBox="0 0 19 19"><circle cx="11.5" cy="7.5" r="6" fill="none" stroke="#222" stroke-width="1.3"/><path d="M7 12 L1 18" stroke="#222" stroke-width="1.5"/></svg>
<span class="a t" id="t111" style="transform:scaleX(0.9655);left:88px;top:837.3px;font-size:15px;line-height:15px;color:#222222;">Type here to search</span>
<svg class="a" style="left:408px;top:835px;" width="17" height="18" viewBox="0 0 17 18"><rect x="1.5" y="4" width="11" height="10" fill="none" stroke="#fff" stroke-width="1.3"/><path d="M0 1.5 H14 M0 16.5 H14" stroke="#fff" stroke-width="1.3"/><path d="M16 1 V3 M16 6 V12 M16 15 V17" stroke="#fff" stroke-width="1.3"/></svg>
<svg class="a" style="left:450px;top:832px;" width="24" height="24" viewBox="0 0 24 24"><rect x="0" y="0" width="24" height="24" fill="#5f5f5f"/><circle cx="9" cy="14" r="5" fill="#fff"/><rect x="12" y="9" width="8" height="7" fill="#fff"/><path d="M13.5 9 V6 A2.5 2.5 0 0 1 18.5 6 V9" stroke="#fff" fill="none" stroke-width="1.5"/></svg>
<svg class="a" style="left:489px;top:834px;" width="24" height="20" viewBox="0 0 24 20"><path d="M0 2 H9 L11 4 H24 V20 H0 Z" fill="#f8d775"/><rect x="0" y="6" width="24" height="14" fill="#ffe28a"/><rect x="7" y="12" width="10" height="6" fill="#1e88e5"/></svg>
<svg class="a" style="left:529px;top:832px;" width="23" height="24" viewBox="0 0 23 24"><path d="M12 3 C18 3 21 8 20 13 H7 C8 17 12 19 18 17 V21 C10 24 3 20 3 13 C3 7 7 3 12 3 Z M7 10 H16 C16 7 14 6 11.5 6 C9 6 7.5 7.5 7 10 Z" fill="#1ea7e1"/><path d="M1 20 C-2 16 10 2 22 1 C24 2 23 6 20 9" stroke="#f2c811" stroke-width="1.8" fill="none"/></svg>
<svg class="a" style="left:565px;top:834px;" width="24" height="20" viewBox="0 0 24 20"><path d="M4 0 H24 L20 16 H0 Z" fill="#3aa0d8"/><path d="M7 4 L12 8 L6 12" stroke="#fff" stroke-width="1.5" fill="none"/><path d="M12 12 H17" stroke="#fff" stroke-width="1.5"/><rect x="0" y="16" width="20" height="4" fill="#9fb7c6"/></svg>
<span class="a t" id="t112" style="transform:scaleX(0.8711);left:593px;top:837.0px;font-size:13px;line-height:13px;color:#ffffff;-webkit-text-stroke:0.3px #fff;">A...</span>
<div class="a" style="left:564px;top:862px;width:48px;height:2px;background:#76b9ed;"></div>
<svg class="a" style="left:622px;top:832px;" width="22" height="24" viewBox="0 0 22 24"><path d="M6 1 L21 3 L17 23 L1 20 Z" fill="#b9d9e7"/><path d="M6 1 L21 3 L20 7 L5 5 Z" fill="#7ea9bd"/></svg>
<span class="a t" id="t113" style="transform:scaleX(1.0688);left:650px;top:837.0px;font-size:13px;line-height:13px;color:#ffffff;-webkit-text-stroke:0.3px #fff;">*...</span>
<div class="a" style="left:621px;top:862px;width:48px;height:2px;background:#76b9ed;"></div>
<svg class="a" style="left:680px;top:833px;" width="22" height="22" viewBox="0 0 22 22"><circle cx="11" cy="11" r="11" fill="#db4437"/><path d="M11 11 L1.5 5.5 A11 11 0 0 0 11 22 Z" fill="#0f9d58"/><path d="M11 11 L11 22 A11 11 0 0 0 20.5 5.5 Z" fill="#ffcd40"/><circle cx="11" cy="11" r="5" fill="#fff"/><circle cx="11" cy="11" r="4" fill="#4285f4"/></svg>
<span class="a t" id="t114" style="transform:scaleX(0.8402);left:707px;top:837.0px;font-size:13px;line-height:13px;color:#ffffff;-webkit-text-stroke:0.3px #fff;">C...</span>
<div class="a" style="left:678px;top:862px;width:48px;height:2px;background:#76b9ed;"></div>
<svg class="a" style="left:736px;top:833px;" width="22" height="22" viewBox="0 0 22 22"><circle cx="11" cy="11" r="11" fill="#db4437"/><path d="M11 11 L1.5 5.5 A11 11 0 0 0 11 22 Z" fill="#0f9d58"/><path d="M11 11 L11 22 A11 11 0 0 0 20.5 5.5 Z" fill="#ffcd40"/><circle cx="11" cy="11" r="5" fill="#fff"/><circle cx="11" cy="11" r="4" fill="#4285f4"/></svg>
<span class="a t" id="t115" style="transform:scaleX(0.8711);left:763px;top:837.0px;font-size:13px;line-height:13px;color:#ffffff;-webkit-text-stroke:0.3px #fff;">A...</span>
<div class="a" style="left:734px;top:862px;width:48px;height:2px;background:#76b9ed;"></div>
<svg class="a" style="left:795px;top:834px;" width="16" height="20" viewBox="0 0 16 20"><path d="M2 2 L14 0 V18 L2 20 Z" fill="#f8d775"/><path d="M0 3 L2 2 V20 L0 19 Z" fill="#dcb44f"/></svg>
<span class="a t" id="t116" style="transform:scaleX(0.8402);left:820px;top:837.0px;font-size:13px;line-height:13px;color:#ffffff;-webkit-text-stroke:0.3px #fff;">C...</span>
<div class="a" style="left:791px;top:862px;width:48px;height:2px;background:#76b9ed;"></div>
<svg class="a" style="left:851px;top:834px;" width="16" height="20" viewBox="0 0 16 20"><path d="M2 2 L14 0 V18 L2 20 Z" fill="#f8d775"/><path d="M0 3 L2 2 V20 L0 19 Z" fill="#dcb44f"/></svg>
<span class="a t" id="t117" style="transform:scaleX(0.8402);left:876px;top:837.0px;font-size:13px;line-height:13px;color:#ffffff;-webkit-text-stroke:0.3px #fff;">C...</span>
<div class="a" style="left:847px;top:862px;width:48px;height:2px;background:#76b9ed;"></div>
<svg class="a" style="left:907px;top:834px;" width="16" height="20" viewBox="0 0 16 20"><path d="M2 2 L14 0 V18 L2 20 Z" fill="#f8d775"/><path d="M0 3 L2 2 V20 L0 19 Z" fill="#dcb44f"/></svg>
<span class="a t" id="t118" style="transform:scaleX(0.8402);left:932px;top:837.0px;font-size:13px;line-height:13px;color:#ffffff;-webkit-text-stroke:0.3px #fff;">C...</span>
<div class="a" style="left:903px;top:862px;width:48px;height:2px;background:#76b9ed;"></div>
<svg class="a" style="left:963px;top:834px;" width="16" height="20" viewBox="0 0 16 20"><path d="M2 2 L14 0 V18 L2 20 Z" fill="#f8d775"/><path d="M0 3 L2 2 V20 L0 19 Z" fill="#dcb44f"/></svg>
<span class="a t" id="t119" style="transform:scaleX(0.8402);left:988px;top:837.0px;font-size:13px;line-height:13px;color:#ffffff;-webkit-text-stroke:0.3px #fff;">C...</span>
<div class="a" style="left:959px;top:862px;width:48px;height:2px;background:#76b9ed;"></div>
<svg class="a" style="left:1017px;top:832px;" width="24" height="24" viewBox="0 0 24 24"><circle cx="9" cy="10" r="8" fill="#3d8fd8"/><path d="M3 8 C6 4 12 4 15 8 C12 11 6 11 3 8 Z" fill="#5fb14a"/><rect x="12" y="6" width="10" height="17" fill="#b8b8b8" stroke="#777"/><path d="M14 10 H20 M14 13 H20 M14 16 H20" stroke="#666"/><path d="M2 2 L9 6" stroke="#f2c811" stroke-width="2"/></svg>
<span class="a t" id="t120" style="transform:scaleX(1.1762);left:1045px;top:837.0px;font-size:13px;line-height:13px;color:#ffffff;-webkit-text-stroke:0.3px #fff;">I...</span>
<div class="a" style="left:1016px;top:862px;width:48px;height:2px;background:#76b9ed;"></div>
<svg class="a" style="left:1073px;top:832px;" width="24" height="24" viewBox="0 0 24 24"><path d="M17 0 L24 3 V21 L17 24 L6 14 L2 17 L0 16 V8 L2 7 L6 10 Z M17 6 L10 12 L17 18 Z M2 10 V14 L4 12 Z" fill="#865fc5" fill-rule="evenodd"/></svg>
<span class="a t" id="t121" style="transform:scaleX(0.8711);left:1101px;top:837.0px;font-size:13px;line-height:13px;color:#ffffff;-webkit-text-stroke:0.3px #fff;">A...</span>
<div class="a" style="left:1072px;top:862px;width:48px;height:2px;background:#76b9ed;"></div>
<svg class="a" style="left:1130px;top:833px;" width="22" height="22" viewBox="0 0 22 22"><rect x="1" y="1" width="20" height="15" fill="#d5e3ea" stroke="#9aa"/><path d="M3 11 L7 8 L9 12 L12 4 L15 10 L19 7" stroke="#2d8fd5" fill="none"/><rect x="5" y="17" width="12" height="4" fill="#8a9aa5"/></svg>
<span class="a t" id="t122" style="transform:scaleX(0.9802);left:1158px;top:837.0px;font-size:13px;line-height:13px;color:#ffffff;-webkit-text-stroke:0.3px #fff;">T...</span>
<div class="a" style="left:1129px;top:862px;width:48px;height:2px;background:#76b9ed;"></div>
<svg class="a" style="left:1187px;top:834px;" width="24" height="20" viewBox="0 0 24 20"><path d="M4 0 H24 L20 16 H0 Z" fill="#3aa0d8"/><path d="M7 4 L12 8 L6 12" stroke="#fff" stroke-width="1.5" fill="none"/><path d="M12 12 H17" stroke="#fff" stroke-width="1.5"/><rect x="0" y="16" width="20" height="4" fill="#9fb7c6"/></svg>
<span class="a t" id="t123" style="transform:scaleX(0.8711);left:1215px;top:837.0px;font-size:13px;line-height:13px;color:#ffffff;-webkit-text-stroke:0.3px #fff;">A...</span>
<div class="a" style="left:1186px;top:862px;width:48px;height:2px;background:#76b9ed;"></div>
<svg class="a" style="left:1245px;top:836px;" width="12" height="14" viewBox="0 0 12 14"><rect x="0.5" y="0.5" width="11" height="13" fill="#2a2a2a" stroke="#bbb"/><path d="M2 3 H10 M2 5.5 H10 M2 8 H10 M2 10.5 H10" stroke="#777" stroke-dasharray="1 1"/><rect x="0" y="12.5" width="12" height="1.5" fill="#3aa0d8"/></svg>
<svg class="a" style="left:1267px;top:835px;" width="16" height="18" viewBox="0 0 16 18"><path d="M7 0 L14 3 V9 C14 13 10 16 7 17 C4 16 0 13 0 9 V3 Z" fill="#fff"/><path d="M7 0 V17 M0 8 H14" stroke="#101010"/><circle cx="12" cy="14" r="4" fill="#2ea043"/></svg>
<svg class="a" style="left:1296px;top:834px;" width="11" height="20" viewBox="0 0 11 20"><rect x="2" y="0" width="6" height="5" fill="none" stroke="#fff"/><path d="M0.5 5.5 H10.5 V19.5 H0.5 Z" fill="none" stroke="#fff"/></svg>
<svg class="a" style="left:1317px;top:836px;" width="12" height="16" viewBox="0 0 12 16"><rect x="4" y="0" width="4" height="2" fill="#ddd"/><rect x="0.5" y="1.5" width="11" height="14" rx="1.5" fill="#1f6b3a" stroke="#ddd"/><rect x="2" y="8" width="8" height="6.5" fill="#2e8b4a"/><path d="M4 5 H8 M6 3 V7" stroke="#fff"/></svg>
<svg class="a" style="left:1339px;top:836px;" width="20" height="17" viewBox="0 0 20 17"><rect x="0.5" y="0.5" width="12" height="8" fill="none" stroke="#fff"/><rect x="5.5" y="4.5" width="14" height="9" fill="#101010" stroke="#fff"/><path d="M12 14 V17 M8 16.5 H16" stroke="#fff"/></svg>
<svg class="a" style="left:1362px;top:836px;" width="20" height="16" viewBox="0 0 20 16"><path d="M1 5 H5 L10 1 V15 L5 11 H1 Z" fill="none" stroke="#fff"/><path d="M13 5 C15 7 15 9 13 11 M15.5 3 C19 6 19 10 15.5 13" stroke="#fff" fill="none"/></svg>
<span class="a t" id="t124" style="transform:scaleX(0.8164);left:1389px;top:836.0px;font-size:13px;line-height:13px;color:#ffffff;">ENG</span>
<span class="a t" id="t125" style="transform:scaleX(0.8804);left:1427px;top:828.0px;font-size:13px;line-height:13px;color:#ffffff;">12:39 PM</span>
<span class="a t" id="t126" style="transform:scaleX(0.8644);left:1426px;top:847.0px;font-size:13px;line-height:13px;color:#ffffff;">1/26/2021</span>
<svg class="a" style="left:1494px;top:835px;" width="27" height="24" viewBox="0 0 27 24"><path d="M1 1 H19 V14 H6 L1 18 Z" fill="#fff"/><path d="M4 5 H16 M4 8 H16 M4 11 H12" stroke="#101010"/><circle cx="20" cy="17" r="6.5" fill="#101010" stroke="#fff"/><text x="20" y="21" font-size="10" font-family="Liberation Sans" fill="#fff" text-anchor="middle">1</text></svg>
</body></html>
